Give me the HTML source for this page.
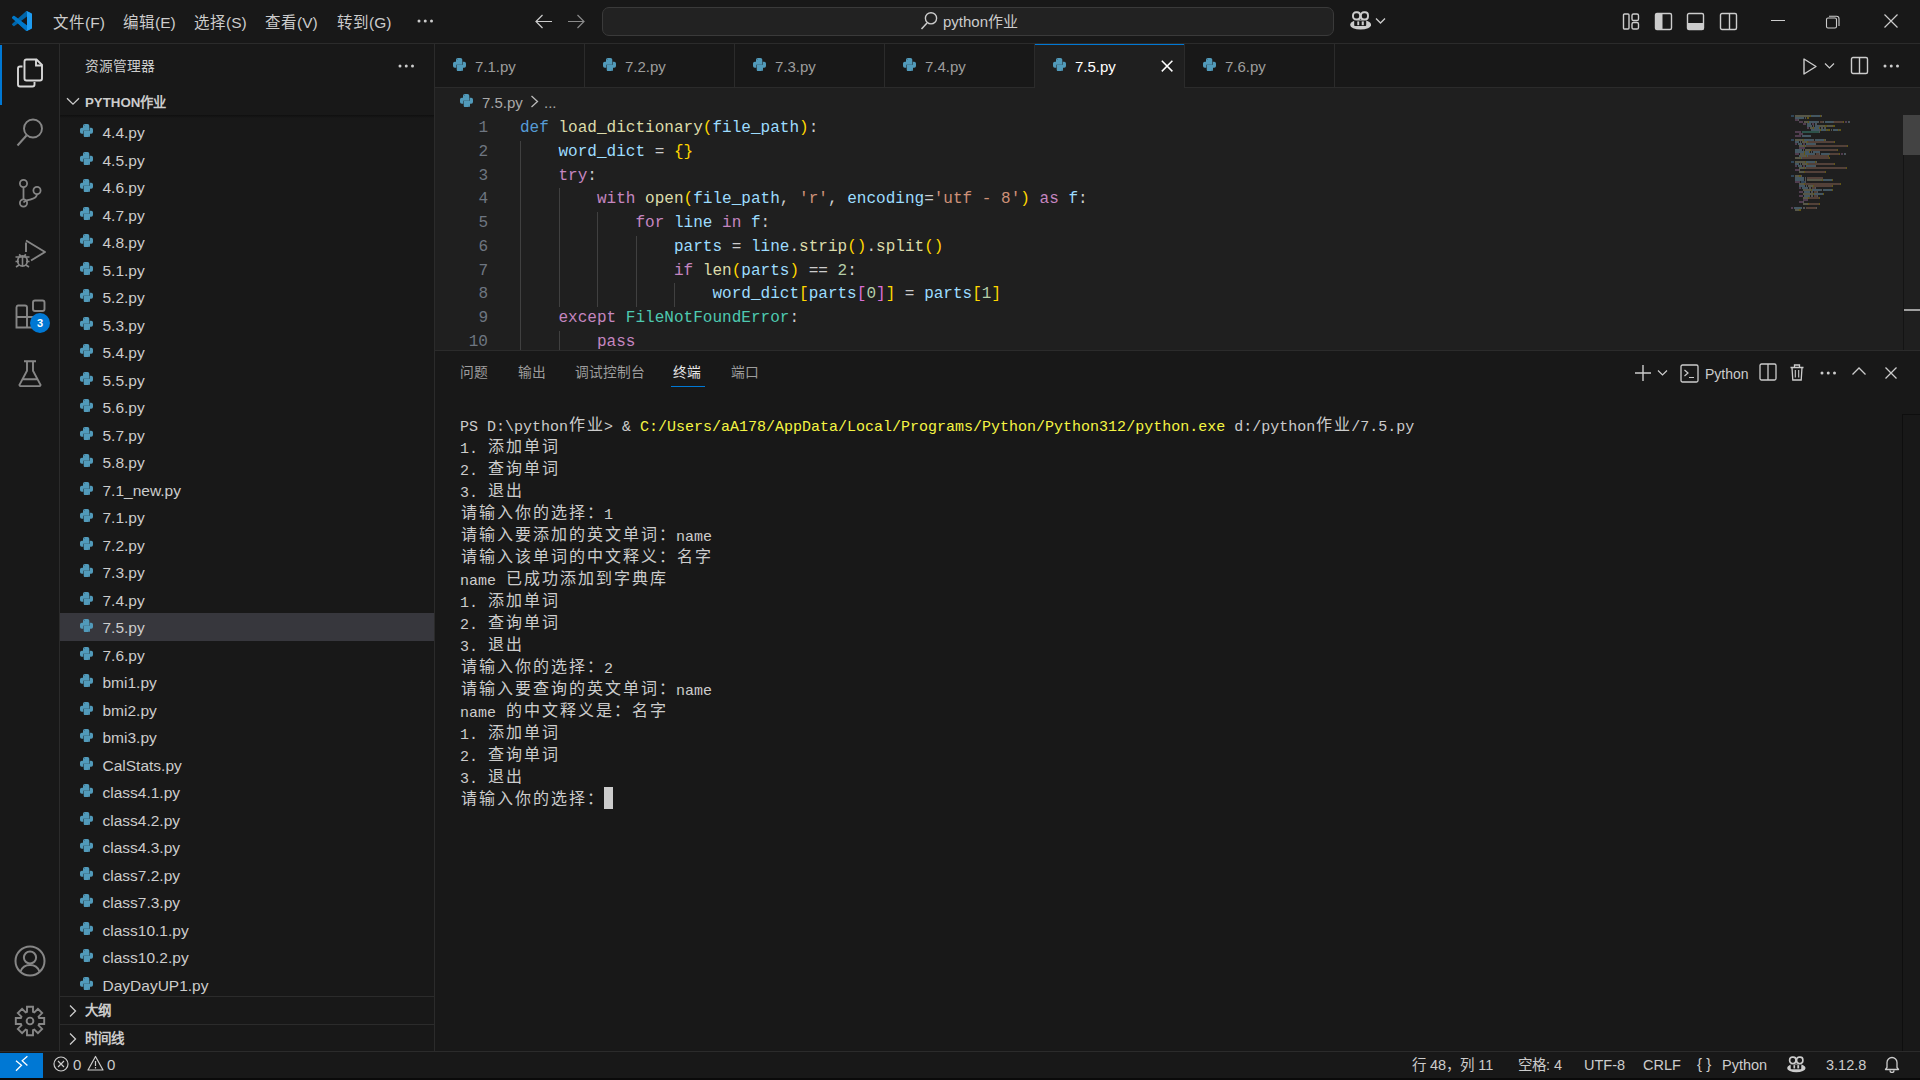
<!DOCTYPE html><html lang="zh-CN"><head><meta charset="utf-8"><title>VS Code</title><style>

*{margin:0;padding:0;box-sizing:border-box}
html,body{width:1920px;height:1080px;overflow:hidden;background:#181818;font-family:"Liberation Sans",sans-serif;color:#cccccc}
.abs{position:absolute}
.t{position:absolute;white-space:pre}
.code{position:absolute;left:520px;font-family:"Liberation Mono",monospace;font-size:16.04px;white-space:pre;color:#cccccc;height:23.75px;line-height:23.75px}
.ln{position:absolute;left:440px;width:48px;text-align:right;font-family:"Liberation Mono",monospace;font-size:16.04px;color:#6e7681;height:23.75px;line-height:23.75px}
.kw{color:#569cd6}.ct{color:#c586c0}.fn{color:#dcdcaa}.vr{color:#9cdcfe}.st{color:#ce9178}.nm{color:#b5cea8}.cl{color:#4ec9b0}.b1{color:#ffd700}.b2{color:#da70d6}.op{color:#cccccc}
.guide{position:absolute;width:1px;background:#404040}
.row{position:absolute;left:60px;width:374px;height:27.5px}
.row .n{position:absolute;left:42.5px;top:1px;font-size:15.5px;line-height:27.5px;color:#cccccc;white-space:pre}
.term{position:absolute;left:460px;font-family:"Liberation Mono",monospace;font-size:15px;white-space:pre;color:#cccccc;height:22px;line-height:22px}
.w{display:inline-block;position:relative;top:-1px;width:18px;text-align:center;font-family:"Liberation Sans",sans-serif;font-size:16px}
.ico{position:absolute}

</style></head><body>
<div class="abs" style="left:0;top:0;width:1920px;height:43px;background:#181818"></div>
<div class="abs" style="left:0;top:43px;width:1920px;height:1px;background:#2b2b2b"></div>
<svg class="ico" style="left:12px;top:11px" width="20" height="20" viewBox="0 0 100 100"><path fill="#0065a9" d="M96.5 10.8 75.9.9a6.2 6.2 0 0 0-7.1 1.2L29.4 38 12.2 25a4.2 4.2 0 0 0-5.3.2l-5.5 5a4.2 4.2 0 0 0 0 6.2L16.3 50 1.4 63.6a4.2 4.2 0 0 0 0 6.2l5.5 5a4.2 4.2 0 0 0 5.3.2l17.2-13L68.8 97.9a6.2 6.2 0 0 0 7.1 1.2l20.6-9.9a6.2 6.2 0 0 0 3.5-5.6V16.4a6.2 6.2 0 0 0-3.5-5.6zM75 72.7 45.1 50 75 27.3v45.4z"/><path fill="#007acc" d="M96.5 89.2 75.9 99.1a6.2 6.2 0 0 1-7.1-1.2L1.4 36.4a4.2 4.2 0 0 1 0-6.2l5.5-5a4.2 4.2 0 0 1 5.3-.2l84.3 64.2z" opacity=".9"/><path fill="#1f9cf0" d="M75.9 99.1a6.2 6.2 0 0 1-7.1-1.2c2.3 2.3 6.2.7 6.2-2.6V4.7c0-3.3-3.9-4.9-6.2-2.6a6.2 6.2 0 0 1 7.1-1.2l20.6 9.9a6.2 6.2 0 0 1 3.5 5.6v67.2a6.2 6.2 0 0 1-3.5 5.6z"/></svg>
<div class="t" style="left:53px;top:13px;font-size:15.5px;line-height:20px;color:#cccccc">文件(F)</div>
<div class="t" style="left:123px;top:13px;font-size:15.5px;line-height:20px;color:#cccccc">编辑(E)</div>
<div class="t" style="left:194px;top:13px;font-size:15.5px;line-height:20px;color:#cccccc">选择(S)</div>
<div class="t" style="left:265px;top:13px;font-size:15.5px;line-height:20px;color:#cccccc">查看(V)</div>
<div class="t" style="left:337px;top:13px;font-size:15.5px;line-height:20px;color:#cccccc">转到(G)</div>
<svg class="ico" style="left:416px;top:18px" width="18.5" height="6" viewBox="0 0 18.5 6"><circle cx="3" cy="3" r="1.5" fill="#cccccc"/><circle cx="9.25" cy="3" r="1.5" fill="#cccccc"/><circle cx="15.5" cy="3" r="1.5" fill="#cccccc"/></svg>
<svg class="ico" style="left:534px;top:13px" width="19" height="17" viewBox="0 0 19 17"><path d="M18 8.5H2M8.5 2 2 8.5 8.5 15" fill="none" stroke="#cccccc" stroke-width="1.2"/></svg>
<svg class="ico" style="left:567px;top:13px" width="19" height="17" viewBox="0 0 19 17"><path d="M1 8.5h16M10.5 2 17 8.5 10.5 15" fill="none" stroke="#8b8b8b" stroke-width="1.2"/></svg>
<div class="abs" style="left:602px;top:7px;width:732px;height:29px;background:#222222;border:1px solid #3a3a3a;border-radius:7px"></div>
<svg class="ico" style="left:920px;top:12px" width="18" height="19" viewBox="0 0 18 19"><circle cx="11" cy="6.3" r="5.6" fill="none" stroke="#cccccc" stroke-width="1.4"/><path d="M7 11 1.5 17" stroke="#cccccc" stroke-width="1.5"/></svg>
<div class="t" style="left:943px;top:12px;font-size:15px;line-height:20px;color:#cccccc">python作业</div>
<svg class="ico" style="left:1350px;top:11px" width="21" height="19.0" viewBox="0 0 21 19"><ellipse cx="10.6" cy="13.7" rx="10.5" ry="4.9" fill="#cccccc"/><rect x="3" y="1.25" width="7.1" height="7.3" rx="3" fill="#181818" stroke="#cccccc" stroke-width="1.9"/><rect x="10.9" y="1.25" width="7.1" height="7.3" rx="3" fill="#181818" stroke="#cccccc" stroke-width="1.9"/><rect x="4.2" y="9.6" width="12" height="5.5" rx=".8" fill="#181818"/><rect x="7.3" y="10.4" width="1.9" height="3.8" fill="#cccccc"/><rect x="11.7" y="10.4" width="2.1" height="3.8" fill="#cccccc"/></svg>
<svg class="ico" style="left:1375px;top:17px" width="11" height="8" viewBox="0 0 11 8"><path d="M1 1.5 5.5 6 10 1.5" fill="none" stroke="#cccccc" stroke-width="1.3"/></svg>
<svg class="ico" style="left:1622px;top:12px" width="19" height="19" viewBox="0 0 19 19"><rect x="1.5" y="2" width="5.5" height="15" rx="1" fill="none" stroke="#cccccc" stroke-width="1.4"/><rect x="10" y="2" width="6.5" height="6.5" rx="1.6" fill="none" stroke="#cccccc" stroke-width="1.4"/><rect x="10" y="10.5" width="6.5" height="6.5" rx="1.6" fill="none" stroke="#cccccc" stroke-width="1.4"/></svg>
<svg class="ico" style="left:1654px;top:12px" width="19" height="19" viewBox="0 0 19 19"><rect x="1.5" y="1.5" width="16" height="16" rx="1.5" fill="none" stroke="#cccccc" stroke-width="1.4"/><rect x="1.5" y="1.5" width="7" height="16" fill="#cccccc"/></svg>
<svg class="ico" style="left:1686px;top:12px" width="19" height="19" viewBox="0 0 19 19"><rect x="1.5" y="1.5" width="16" height="16" rx="1.5" fill="none" stroke="#cccccc" stroke-width="1.4"/><rect x="1.5" y="11" width="16" height="6.5" fill="#cccccc"/></svg>
<svg class="ico" style="left:1719px;top:12px" width="19" height="19" viewBox="0 0 19 19"><rect x="1.5" y="1.5" width="16" height="16" rx="1.5" fill="none" stroke="#cccccc" stroke-width="1.4"/><path d="M10.5 1.5v16" stroke="#cccccc" stroke-width="1.4"/></svg>
<div class="abs" style="left:1771px;top:20px;width:14px;height:1px;background:#cccccc"></div>
<svg class="ico" style="left:1825px;top:14px" width="16" height="15" viewBox="0 0 16 15"><rect x="1.5" y="4" width="10" height="10" rx="1.5" fill="none" stroke="#cccccc" stroke-width="1.1"/><path d="M4 2.2h7.5a2.5 2.5 0 0 1 2.5 2.5V12" fill="none" stroke="#cccccc" stroke-width="1.1"/></svg>
<svg class="ico" style="left:1883px;top:13px" width="16" height="16" viewBox="0 0 16 16"><path d="M1.5 1.5l13 13M14.5 1.5l-13 13" stroke="#cccccc" stroke-width="1.2"/></svg>
<div class="abs" style="left:59px;top:44px;width:1px;height:1007px;background:#2b2b2b"></div>
<div class="abs" style="left:0;top:45px;width:2px;height:60px;background:#0078d4"></div>
<svg class="ico" style="left:15px;top:57px" width="30" height="32" viewBox="0 0 30 32"><path d="M11.5 2.5h10l5.5 5.5v13.5a2 2 0 0 1-2 2h-13.5a2 2 0 0 1-2-2V4.5a2 2 0 0 1 2-2z" fill="none" stroke="#d7d7d7" stroke-width="1.9"/><path d="M21 2.5v6h6" fill="none" stroke="#d7d7d7" stroke-width="1.9"/><path d="M7.5 9.5H5a2 2 0 0 0-2 2v16a2 2 0 0 0 2 2h12.5a2 2 0 0 0 2-2V25" fill="none" stroke="#d7d7d7" stroke-width="1.9"/></svg>
<svg class="ico" style="left:15px;top:117px" width="30" height="32" viewBox="0 0 30 32"><circle cx="18" cy="11.5" r="9" fill="none" stroke="#868686" stroke-width="1.9"/><path d="M11.5 18.5 2.5 28.5" stroke="#868686" stroke-width="2"/></svg>
<svg class="ico" style="left:15px;top:177px" width="30" height="32" viewBox="0 0 30 32"><circle cx="8.5" cy="6.5" r="3.6" fill="none" stroke="#868686" stroke-width="1.8"/><circle cx="8.5" cy="26" r="3.6" fill="none" stroke="#868686" stroke-width="1.8"/><circle cx="22" cy="13.5" r="3.6" fill="none" stroke="#868686" stroke-width="1.8"/><path d="M8.5 10v12.4M22 17.1c0 3.4-3 4.6-6.5 5.4-3 .6-5.5 1-7 3" fill="none" stroke="#868686" stroke-width="1.8"/></svg>
<svg class="ico" style="left:13px;top:236px" width="34" height="34" viewBox="0 0 34 34"><path d="M13 6.5v9.5M13 4.5l19 11.5-14 8.5" fill="none" stroke="#868686" stroke-width="1.9" stroke-linejoin="round"/><ellipse cx="9.5" cy="25" rx="4.8" ry="5.2" fill="none" stroke="#868686" stroke-width="1.8"/><path d="M2.5 21h14M2.5 25.5h3.5M13 25.5h3.5M3 31l3-2M16 31l-3-2M6 18.5l2 1.5M13 18.5l-2 1.5M9.5 20v10" fill="none" stroke="#868686" stroke-width="1.6"/></svg>
<svg class="ico" style="left:14px;top:296px" width="32" height="34" viewBox="0 0 32 34"><path d="M4 9.5h7a2 2 0 0 1 2 2v20H2.5V11.5a2 2 0 0 1 1.5-2zM2.5 21h18.5v10.5H13" fill="none" stroke="#868686" stroke-width="1.9"/><rect x="19" y="4.5" width="11.5" height="10.5" rx="2" fill="none" stroke="#868686" stroke-width="1.9"/></svg>
<div class="abs" style="left:30px;top:313px;width:20px;height:20px;border-radius:10px;background:#0078d4;color:#ffffff;font:bold 11px/20px 'Liberation Sans',sans-serif;text-align:center">3</div>
<svg class="ico" style="left:16px;top:357px" width="28" height="34" viewBox="0 0 28 34"><path d="M8 4.2h12M11 4.2v9.5L3.6 27.6a1 1 0 0 0 .9 1.5h19a1 1 0 0 0 .9-1.5L17 13.7V4.2M6.5 22.2h15" fill="none" stroke="#868686" stroke-width="1.9" stroke-linejoin="round"/></svg>
<svg class="ico" style="left:13px;top:944px" width="34" height="34" viewBox="0 0 34 34"><circle cx="17" cy="17" r="14.5" fill="none" stroke="#868686" stroke-width="2"/><circle cx="17" cy="13.5" r="6.1" fill="none" stroke="#868686" stroke-width="2"/><path d="M7.5 27.5c1.5-4 5-6.5 9.5-6.5s8 2.5 9.5 6.5" fill="none" stroke="#868686" stroke-width="2"/></svg>
<svg class="ico" style="left:13px;top:1004px" width="34" height="34" viewBox="0 0 34 34"><path d="M14.00 7.88L14.00 2.80L20.00 2.80L20.00 7.88L21.33 8.43L24.92 4.84L29.16 9.08L25.57 12.67L26.12 14.00L31.20 14.00L31.20 20.00L26.12 20.00L25.57 21.33L29.16 24.92L24.92 29.16L21.33 25.57L20.00 26.12L20.00 31.20L14.00 31.20L14.00 26.12L12.67 25.57L9.08 29.16L4.84 24.92L8.43 21.33L7.88 20.00L2.80 20.00L2.80 14.00L7.88 14.00L8.43 12.67L4.84 9.08L9.08 4.84L12.67 8.43Z" fill="none" stroke="#868686" stroke-width="1.9" stroke-linejoin="miter"/><circle cx="17" cy="17" r="3.4" fill="none" stroke="#868686" stroke-width="1.9"/></svg>
<div class="abs" style="left:434px;top:44px;width:1px;height:1007px;background:#2b2b2b"></div>
<div class="t" style="left:85px;top:57.5px;font-size:13.75px;line-height:18px;color:#cccccc;font-weight:500">资源管理器</div>
<svg class="ico" style="left:397px;top:63px" width="18.5" height="6" viewBox="0 0 18.5 6"><circle cx="3" cy="3" r="1.5" fill="#cccccc"/><circle cx="9.25" cy="3" r="1.5" fill="#cccccc"/><circle cx="15.5" cy="3" r="1.5" fill="#cccccc"/></svg>
<svg class="ico" style="left:66px;top:97px" width="14" height="9" viewBox="0 0 14 9"><path d="M1 1.2 7 7.2 13 1.2" fill="none" stroke="#cccccc" stroke-width="1.3"/></svg>
<div class="t" style="left:85px;top:94px;font-weight:bold;font-size:13.3px;line-height:18px;color:#cccccc">PYTHON作业</div>
<div class="abs" style="left:60px;top:115px;width:374px;height:3px;background:linear-gradient(#0f0f0f,#181818)"></div>
<div class="row" style="top:118.0px;"><svg style="position:absolute;left:20px;top:6px" width="13" height="13.4" viewBox="0 0 13 13.4"><path fill="#519aba" d="M4.8 0H7.5Q9.3 0 9.3 1.8V6.7H3.3V9.7H1.8Q0 9.7 0 7.9V5.5Q0 3.7 1.8 3.7H3V1.8Q3 0 4.8 0Z"/><path fill="#519aba" transform="rotate(180 6.5 6.7)" d="M4.8 0H7.5Q9.3 0 9.3 1.8V6.7H3.3V9.7H1.8Q0 9.7 0 7.9V5.5Q0 3.7 1.8 3.7H3V1.8Q3 0 4.8 0Z"/><circle cx="4.4" cy="1.3" r=".45" fill="#2b4c66"/><circle cx="8.6" cy="12.1" r=".45" fill="#2b4c66"/></svg><div class="n">4.4.py</div></div>
<div class="row" style="top:145.5px;"><svg style="position:absolute;left:20px;top:6px" width="13" height="13.4" viewBox="0 0 13 13.4"><path fill="#519aba" d="M4.8 0H7.5Q9.3 0 9.3 1.8V6.7H3.3V9.7H1.8Q0 9.7 0 7.9V5.5Q0 3.7 1.8 3.7H3V1.8Q3 0 4.8 0Z"/><path fill="#519aba" transform="rotate(180 6.5 6.7)" d="M4.8 0H7.5Q9.3 0 9.3 1.8V6.7H3.3V9.7H1.8Q0 9.7 0 7.9V5.5Q0 3.7 1.8 3.7H3V1.8Q3 0 4.8 0Z"/><circle cx="4.4" cy="1.3" r=".45" fill="#2b4c66"/><circle cx="8.6" cy="12.1" r=".45" fill="#2b4c66"/></svg><div class="n">4.5.py</div></div>
<div class="row" style="top:173.0px;"><svg style="position:absolute;left:20px;top:6px" width="13" height="13.4" viewBox="0 0 13 13.4"><path fill="#519aba" d="M4.8 0H7.5Q9.3 0 9.3 1.8V6.7H3.3V9.7H1.8Q0 9.7 0 7.9V5.5Q0 3.7 1.8 3.7H3V1.8Q3 0 4.8 0Z"/><path fill="#519aba" transform="rotate(180 6.5 6.7)" d="M4.8 0H7.5Q9.3 0 9.3 1.8V6.7H3.3V9.7H1.8Q0 9.7 0 7.9V5.5Q0 3.7 1.8 3.7H3V1.8Q3 0 4.8 0Z"/><circle cx="4.4" cy="1.3" r=".45" fill="#2b4c66"/><circle cx="8.6" cy="12.1" r=".45" fill="#2b4c66"/></svg><div class="n">4.6.py</div></div>
<div class="row" style="top:200.5px;"><svg style="position:absolute;left:20px;top:6px" width="13" height="13.4" viewBox="0 0 13 13.4"><path fill="#519aba" d="M4.8 0H7.5Q9.3 0 9.3 1.8V6.7H3.3V9.7H1.8Q0 9.7 0 7.9V5.5Q0 3.7 1.8 3.7H3V1.8Q3 0 4.8 0Z"/><path fill="#519aba" transform="rotate(180 6.5 6.7)" d="M4.8 0H7.5Q9.3 0 9.3 1.8V6.7H3.3V9.7H1.8Q0 9.7 0 7.9V5.5Q0 3.7 1.8 3.7H3V1.8Q3 0 4.8 0Z"/><circle cx="4.4" cy="1.3" r=".45" fill="#2b4c66"/><circle cx="8.6" cy="12.1" r=".45" fill="#2b4c66"/></svg><div class="n">4.7.py</div></div>
<div class="row" style="top:228.0px;"><svg style="position:absolute;left:20px;top:6px" width="13" height="13.4" viewBox="0 0 13 13.4"><path fill="#519aba" d="M4.8 0H7.5Q9.3 0 9.3 1.8V6.7H3.3V9.7H1.8Q0 9.7 0 7.9V5.5Q0 3.7 1.8 3.7H3V1.8Q3 0 4.8 0Z"/><path fill="#519aba" transform="rotate(180 6.5 6.7)" d="M4.8 0H7.5Q9.3 0 9.3 1.8V6.7H3.3V9.7H1.8Q0 9.7 0 7.9V5.5Q0 3.7 1.8 3.7H3V1.8Q3 0 4.8 0Z"/><circle cx="4.4" cy="1.3" r=".45" fill="#2b4c66"/><circle cx="8.6" cy="12.1" r=".45" fill="#2b4c66"/></svg><div class="n">4.8.py</div></div>
<div class="row" style="top:255.5px;"><svg style="position:absolute;left:20px;top:6px" width="13" height="13.4" viewBox="0 0 13 13.4"><path fill="#519aba" d="M4.8 0H7.5Q9.3 0 9.3 1.8V6.7H3.3V9.7H1.8Q0 9.7 0 7.9V5.5Q0 3.7 1.8 3.7H3V1.8Q3 0 4.8 0Z"/><path fill="#519aba" transform="rotate(180 6.5 6.7)" d="M4.8 0H7.5Q9.3 0 9.3 1.8V6.7H3.3V9.7H1.8Q0 9.7 0 7.9V5.5Q0 3.7 1.8 3.7H3V1.8Q3 0 4.8 0Z"/><circle cx="4.4" cy="1.3" r=".45" fill="#2b4c66"/><circle cx="8.6" cy="12.1" r=".45" fill="#2b4c66"/></svg><div class="n">5.1.py</div></div>
<div class="row" style="top:283.0px;"><svg style="position:absolute;left:20px;top:6px" width="13" height="13.4" viewBox="0 0 13 13.4"><path fill="#519aba" d="M4.8 0H7.5Q9.3 0 9.3 1.8V6.7H3.3V9.7H1.8Q0 9.7 0 7.9V5.5Q0 3.7 1.8 3.7H3V1.8Q3 0 4.8 0Z"/><path fill="#519aba" transform="rotate(180 6.5 6.7)" d="M4.8 0H7.5Q9.3 0 9.3 1.8V6.7H3.3V9.7H1.8Q0 9.7 0 7.9V5.5Q0 3.7 1.8 3.7H3V1.8Q3 0 4.8 0Z"/><circle cx="4.4" cy="1.3" r=".45" fill="#2b4c66"/><circle cx="8.6" cy="12.1" r=".45" fill="#2b4c66"/></svg><div class="n">5.2.py</div></div>
<div class="row" style="top:310.5px;"><svg style="position:absolute;left:20px;top:6px" width="13" height="13.4" viewBox="0 0 13 13.4"><path fill="#519aba" d="M4.8 0H7.5Q9.3 0 9.3 1.8V6.7H3.3V9.7H1.8Q0 9.7 0 7.9V5.5Q0 3.7 1.8 3.7H3V1.8Q3 0 4.8 0Z"/><path fill="#519aba" transform="rotate(180 6.5 6.7)" d="M4.8 0H7.5Q9.3 0 9.3 1.8V6.7H3.3V9.7H1.8Q0 9.7 0 7.9V5.5Q0 3.7 1.8 3.7H3V1.8Q3 0 4.8 0Z"/><circle cx="4.4" cy="1.3" r=".45" fill="#2b4c66"/><circle cx="8.6" cy="12.1" r=".45" fill="#2b4c66"/></svg><div class="n">5.3.py</div></div>
<div class="row" style="top:338.0px;"><svg style="position:absolute;left:20px;top:6px" width="13" height="13.4" viewBox="0 0 13 13.4"><path fill="#519aba" d="M4.8 0H7.5Q9.3 0 9.3 1.8V6.7H3.3V9.7H1.8Q0 9.7 0 7.9V5.5Q0 3.7 1.8 3.7H3V1.8Q3 0 4.8 0Z"/><path fill="#519aba" transform="rotate(180 6.5 6.7)" d="M4.8 0H7.5Q9.3 0 9.3 1.8V6.7H3.3V9.7H1.8Q0 9.7 0 7.9V5.5Q0 3.7 1.8 3.7H3V1.8Q3 0 4.8 0Z"/><circle cx="4.4" cy="1.3" r=".45" fill="#2b4c66"/><circle cx="8.6" cy="12.1" r=".45" fill="#2b4c66"/></svg><div class="n">5.4.py</div></div>
<div class="row" style="top:365.5px;"><svg style="position:absolute;left:20px;top:6px" width="13" height="13.4" viewBox="0 0 13 13.4"><path fill="#519aba" d="M4.8 0H7.5Q9.3 0 9.3 1.8V6.7H3.3V9.7H1.8Q0 9.7 0 7.9V5.5Q0 3.7 1.8 3.7H3V1.8Q3 0 4.8 0Z"/><path fill="#519aba" transform="rotate(180 6.5 6.7)" d="M4.8 0H7.5Q9.3 0 9.3 1.8V6.7H3.3V9.7H1.8Q0 9.7 0 7.9V5.5Q0 3.7 1.8 3.7H3V1.8Q3 0 4.8 0Z"/><circle cx="4.4" cy="1.3" r=".45" fill="#2b4c66"/><circle cx="8.6" cy="12.1" r=".45" fill="#2b4c66"/></svg><div class="n">5.5.py</div></div>
<div class="row" style="top:393.0px;"><svg style="position:absolute;left:20px;top:6px" width="13" height="13.4" viewBox="0 0 13 13.4"><path fill="#519aba" d="M4.8 0H7.5Q9.3 0 9.3 1.8V6.7H3.3V9.7H1.8Q0 9.7 0 7.9V5.5Q0 3.7 1.8 3.7H3V1.8Q3 0 4.8 0Z"/><path fill="#519aba" transform="rotate(180 6.5 6.7)" d="M4.8 0H7.5Q9.3 0 9.3 1.8V6.7H3.3V9.7H1.8Q0 9.7 0 7.9V5.5Q0 3.7 1.8 3.7H3V1.8Q3 0 4.8 0Z"/><circle cx="4.4" cy="1.3" r=".45" fill="#2b4c66"/><circle cx="8.6" cy="12.1" r=".45" fill="#2b4c66"/></svg><div class="n">5.6.py</div></div>
<div class="row" style="top:420.5px;"><svg style="position:absolute;left:20px;top:6px" width="13" height="13.4" viewBox="0 0 13 13.4"><path fill="#519aba" d="M4.8 0H7.5Q9.3 0 9.3 1.8V6.7H3.3V9.7H1.8Q0 9.7 0 7.9V5.5Q0 3.7 1.8 3.7H3V1.8Q3 0 4.8 0Z"/><path fill="#519aba" transform="rotate(180 6.5 6.7)" d="M4.8 0H7.5Q9.3 0 9.3 1.8V6.7H3.3V9.7H1.8Q0 9.7 0 7.9V5.5Q0 3.7 1.8 3.7H3V1.8Q3 0 4.8 0Z"/><circle cx="4.4" cy="1.3" r=".45" fill="#2b4c66"/><circle cx="8.6" cy="12.1" r=".45" fill="#2b4c66"/></svg><div class="n">5.7.py</div></div>
<div class="row" style="top:448.0px;"><svg style="position:absolute;left:20px;top:6px" width="13" height="13.4" viewBox="0 0 13 13.4"><path fill="#519aba" d="M4.8 0H7.5Q9.3 0 9.3 1.8V6.7H3.3V9.7H1.8Q0 9.7 0 7.9V5.5Q0 3.7 1.8 3.7H3V1.8Q3 0 4.8 0Z"/><path fill="#519aba" transform="rotate(180 6.5 6.7)" d="M4.8 0H7.5Q9.3 0 9.3 1.8V6.7H3.3V9.7H1.8Q0 9.7 0 7.9V5.5Q0 3.7 1.8 3.7H3V1.8Q3 0 4.8 0Z"/><circle cx="4.4" cy="1.3" r=".45" fill="#2b4c66"/><circle cx="8.6" cy="12.1" r=".45" fill="#2b4c66"/></svg><div class="n">5.8.py</div></div>
<div class="row" style="top:475.5px;"><svg style="position:absolute;left:20px;top:6px" width="13" height="13.4" viewBox="0 0 13 13.4"><path fill="#519aba" d="M4.8 0H7.5Q9.3 0 9.3 1.8V6.7H3.3V9.7H1.8Q0 9.7 0 7.9V5.5Q0 3.7 1.8 3.7H3V1.8Q3 0 4.8 0Z"/><path fill="#519aba" transform="rotate(180 6.5 6.7)" d="M4.8 0H7.5Q9.3 0 9.3 1.8V6.7H3.3V9.7H1.8Q0 9.7 0 7.9V5.5Q0 3.7 1.8 3.7H3V1.8Q3 0 4.8 0Z"/><circle cx="4.4" cy="1.3" r=".45" fill="#2b4c66"/><circle cx="8.6" cy="12.1" r=".45" fill="#2b4c66"/></svg><div class="n">7.1_new.py</div></div>
<div class="row" style="top:503.0px;"><svg style="position:absolute;left:20px;top:6px" width="13" height="13.4" viewBox="0 0 13 13.4"><path fill="#519aba" d="M4.8 0H7.5Q9.3 0 9.3 1.8V6.7H3.3V9.7H1.8Q0 9.7 0 7.9V5.5Q0 3.7 1.8 3.7H3V1.8Q3 0 4.8 0Z"/><path fill="#519aba" transform="rotate(180 6.5 6.7)" d="M4.8 0H7.5Q9.3 0 9.3 1.8V6.7H3.3V9.7H1.8Q0 9.7 0 7.9V5.5Q0 3.7 1.8 3.7H3V1.8Q3 0 4.8 0Z"/><circle cx="4.4" cy="1.3" r=".45" fill="#2b4c66"/><circle cx="8.6" cy="12.1" r=".45" fill="#2b4c66"/></svg><div class="n">7.1.py</div></div>
<div class="row" style="top:530.5px;"><svg style="position:absolute;left:20px;top:6px" width="13" height="13.4" viewBox="0 0 13 13.4"><path fill="#519aba" d="M4.8 0H7.5Q9.3 0 9.3 1.8V6.7H3.3V9.7H1.8Q0 9.7 0 7.9V5.5Q0 3.7 1.8 3.7H3V1.8Q3 0 4.8 0Z"/><path fill="#519aba" transform="rotate(180 6.5 6.7)" d="M4.8 0H7.5Q9.3 0 9.3 1.8V6.7H3.3V9.7H1.8Q0 9.7 0 7.9V5.5Q0 3.7 1.8 3.7H3V1.8Q3 0 4.8 0Z"/><circle cx="4.4" cy="1.3" r=".45" fill="#2b4c66"/><circle cx="8.6" cy="12.1" r=".45" fill="#2b4c66"/></svg><div class="n">7.2.py</div></div>
<div class="row" style="top:558.0px;"><svg style="position:absolute;left:20px;top:6px" width="13" height="13.4" viewBox="0 0 13 13.4"><path fill="#519aba" d="M4.8 0H7.5Q9.3 0 9.3 1.8V6.7H3.3V9.7H1.8Q0 9.7 0 7.9V5.5Q0 3.7 1.8 3.7H3V1.8Q3 0 4.8 0Z"/><path fill="#519aba" transform="rotate(180 6.5 6.7)" d="M4.8 0H7.5Q9.3 0 9.3 1.8V6.7H3.3V9.7H1.8Q0 9.7 0 7.9V5.5Q0 3.7 1.8 3.7H3V1.8Q3 0 4.8 0Z"/><circle cx="4.4" cy="1.3" r=".45" fill="#2b4c66"/><circle cx="8.6" cy="12.1" r=".45" fill="#2b4c66"/></svg><div class="n">7.3.py</div></div>
<div class="row" style="top:585.5px;"><svg style="position:absolute;left:20px;top:6px" width="13" height="13.4" viewBox="0 0 13 13.4"><path fill="#519aba" d="M4.8 0H7.5Q9.3 0 9.3 1.8V6.7H3.3V9.7H1.8Q0 9.7 0 7.9V5.5Q0 3.7 1.8 3.7H3V1.8Q3 0 4.8 0Z"/><path fill="#519aba" transform="rotate(180 6.5 6.7)" d="M4.8 0H7.5Q9.3 0 9.3 1.8V6.7H3.3V9.7H1.8Q0 9.7 0 7.9V5.5Q0 3.7 1.8 3.7H3V1.8Q3 0 4.8 0Z"/><circle cx="4.4" cy="1.3" r=".45" fill="#2b4c66"/><circle cx="8.6" cy="12.1" r=".45" fill="#2b4c66"/></svg><div class="n">7.4.py</div></div>
<div class="row" style="top:613.0px;background:#37373d;"><svg style="position:absolute;left:20px;top:6px" width="13" height="13.4" viewBox="0 0 13 13.4"><path fill="#519aba" d="M4.8 0H7.5Q9.3 0 9.3 1.8V6.7H3.3V9.7H1.8Q0 9.7 0 7.9V5.5Q0 3.7 1.8 3.7H3V1.8Q3 0 4.8 0Z"/><path fill="#519aba" transform="rotate(180 6.5 6.7)" d="M4.8 0H7.5Q9.3 0 9.3 1.8V6.7H3.3V9.7H1.8Q0 9.7 0 7.9V5.5Q0 3.7 1.8 3.7H3V1.8Q3 0 4.8 0Z"/><circle cx="4.4" cy="1.3" r=".45" fill="#2b4c66"/><circle cx="8.6" cy="12.1" r=".45" fill="#2b4c66"/></svg><div class="n">7.5.py</div></div>
<div class="row" style="top:640.5px;"><svg style="position:absolute;left:20px;top:6px" width="13" height="13.4" viewBox="0 0 13 13.4"><path fill="#519aba" d="M4.8 0H7.5Q9.3 0 9.3 1.8V6.7H3.3V9.7H1.8Q0 9.7 0 7.9V5.5Q0 3.7 1.8 3.7H3V1.8Q3 0 4.8 0Z"/><path fill="#519aba" transform="rotate(180 6.5 6.7)" d="M4.8 0H7.5Q9.3 0 9.3 1.8V6.7H3.3V9.7H1.8Q0 9.7 0 7.9V5.5Q0 3.7 1.8 3.7H3V1.8Q3 0 4.8 0Z"/><circle cx="4.4" cy="1.3" r=".45" fill="#2b4c66"/><circle cx="8.6" cy="12.1" r=".45" fill="#2b4c66"/></svg><div class="n">7.6.py</div></div>
<div class="row" style="top:668.0px;"><svg style="position:absolute;left:20px;top:6px" width="13" height="13.4" viewBox="0 0 13 13.4"><path fill="#519aba" d="M4.8 0H7.5Q9.3 0 9.3 1.8V6.7H3.3V9.7H1.8Q0 9.7 0 7.9V5.5Q0 3.7 1.8 3.7H3V1.8Q3 0 4.8 0Z"/><path fill="#519aba" transform="rotate(180 6.5 6.7)" d="M4.8 0H7.5Q9.3 0 9.3 1.8V6.7H3.3V9.7H1.8Q0 9.7 0 7.9V5.5Q0 3.7 1.8 3.7H3V1.8Q3 0 4.8 0Z"/><circle cx="4.4" cy="1.3" r=".45" fill="#2b4c66"/><circle cx="8.6" cy="12.1" r=".45" fill="#2b4c66"/></svg><div class="n">bmi1.py</div></div>
<div class="row" style="top:695.5px;"><svg style="position:absolute;left:20px;top:6px" width="13" height="13.4" viewBox="0 0 13 13.4"><path fill="#519aba" d="M4.8 0H7.5Q9.3 0 9.3 1.8V6.7H3.3V9.7H1.8Q0 9.7 0 7.9V5.5Q0 3.7 1.8 3.7H3V1.8Q3 0 4.8 0Z"/><path fill="#519aba" transform="rotate(180 6.5 6.7)" d="M4.8 0H7.5Q9.3 0 9.3 1.8V6.7H3.3V9.7H1.8Q0 9.7 0 7.9V5.5Q0 3.7 1.8 3.7H3V1.8Q3 0 4.8 0Z"/><circle cx="4.4" cy="1.3" r=".45" fill="#2b4c66"/><circle cx="8.6" cy="12.1" r=".45" fill="#2b4c66"/></svg><div class="n">bmi2.py</div></div>
<div class="row" style="top:723.0px;"><svg style="position:absolute;left:20px;top:6px" width="13" height="13.4" viewBox="0 0 13 13.4"><path fill="#519aba" d="M4.8 0H7.5Q9.3 0 9.3 1.8V6.7H3.3V9.7H1.8Q0 9.7 0 7.9V5.5Q0 3.7 1.8 3.7H3V1.8Q3 0 4.8 0Z"/><path fill="#519aba" transform="rotate(180 6.5 6.7)" d="M4.8 0H7.5Q9.3 0 9.3 1.8V6.7H3.3V9.7H1.8Q0 9.7 0 7.9V5.5Q0 3.7 1.8 3.7H3V1.8Q3 0 4.8 0Z"/><circle cx="4.4" cy="1.3" r=".45" fill="#2b4c66"/><circle cx="8.6" cy="12.1" r=".45" fill="#2b4c66"/></svg><div class="n">bmi3.py</div></div>
<div class="row" style="top:750.5px;"><svg style="position:absolute;left:20px;top:6px" width="13" height="13.4" viewBox="0 0 13 13.4"><path fill="#519aba" d="M4.8 0H7.5Q9.3 0 9.3 1.8V6.7H3.3V9.7H1.8Q0 9.7 0 7.9V5.5Q0 3.7 1.8 3.7H3V1.8Q3 0 4.8 0Z"/><path fill="#519aba" transform="rotate(180 6.5 6.7)" d="M4.8 0H7.5Q9.3 0 9.3 1.8V6.7H3.3V9.7H1.8Q0 9.7 0 7.9V5.5Q0 3.7 1.8 3.7H3V1.8Q3 0 4.8 0Z"/><circle cx="4.4" cy="1.3" r=".45" fill="#2b4c66"/><circle cx="8.6" cy="12.1" r=".45" fill="#2b4c66"/></svg><div class="n">CalStats.py</div></div>
<div class="row" style="top:778.0px;"><svg style="position:absolute;left:20px;top:6px" width="13" height="13.4" viewBox="0 0 13 13.4"><path fill="#519aba" d="M4.8 0H7.5Q9.3 0 9.3 1.8V6.7H3.3V9.7H1.8Q0 9.7 0 7.9V5.5Q0 3.7 1.8 3.7H3V1.8Q3 0 4.8 0Z"/><path fill="#519aba" transform="rotate(180 6.5 6.7)" d="M4.8 0H7.5Q9.3 0 9.3 1.8V6.7H3.3V9.7H1.8Q0 9.7 0 7.9V5.5Q0 3.7 1.8 3.7H3V1.8Q3 0 4.8 0Z"/><circle cx="4.4" cy="1.3" r=".45" fill="#2b4c66"/><circle cx="8.6" cy="12.1" r=".45" fill="#2b4c66"/></svg><div class="n">class4.1.py</div></div>
<div class="row" style="top:805.5px;"><svg style="position:absolute;left:20px;top:6px" width="13" height="13.4" viewBox="0 0 13 13.4"><path fill="#519aba" d="M4.8 0H7.5Q9.3 0 9.3 1.8V6.7H3.3V9.7H1.8Q0 9.7 0 7.9V5.5Q0 3.7 1.8 3.7H3V1.8Q3 0 4.8 0Z"/><path fill="#519aba" transform="rotate(180 6.5 6.7)" d="M4.8 0H7.5Q9.3 0 9.3 1.8V6.7H3.3V9.7H1.8Q0 9.7 0 7.9V5.5Q0 3.7 1.8 3.7H3V1.8Q3 0 4.8 0Z"/><circle cx="4.4" cy="1.3" r=".45" fill="#2b4c66"/><circle cx="8.6" cy="12.1" r=".45" fill="#2b4c66"/></svg><div class="n">class4.2.py</div></div>
<div class="row" style="top:833.0px;"><svg style="position:absolute;left:20px;top:6px" width="13" height="13.4" viewBox="0 0 13 13.4"><path fill="#519aba" d="M4.8 0H7.5Q9.3 0 9.3 1.8V6.7H3.3V9.7H1.8Q0 9.7 0 7.9V5.5Q0 3.7 1.8 3.7H3V1.8Q3 0 4.8 0Z"/><path fill="#519aba" transform="rotate(180 6.5 6.7)" d="M4.8 0H7.5Q9.3 0 9.3 1.8V6.7H3.3V9.7H1.8Q0 9.7 0 7.9V5.5Q0 3.7 1.8 3.7H3V1.8Q3 0 4.8 0Z"/><circle cx="4.4" cy="1.3" r=".45" fill="#2b4c66"/><circle cx="8.6" cy="12.1" r=".45" fill="#2b4c66"/></svg><div class="n">class4.3.py</div></div>
<div class="row" style="top:860.5px;"><svg style="position:absolute;left:20px;top:6px" width="13" height="13.4" viewBox="0 0 13 13.4"><path fill="#519aba" d="M4.8 0H7.5Q9.3 0 9.3 1.8V6.7H3.3V9.7H1.8Q0 9.7 0 7.9V5.5Q0 3.7 1.8 3.7H3V1.8Q3 0 4.8 0Z"/><path fill="#519aba" transform="rotate(180 6.5 6.7)" d="M4.8 0H7.5Q9.3 0 9.3 1.8V6.7H3.3V9.7H1.8Q0 9.7 0 7.9V5.5Q0 3.7 1.8 3.7H3V1.8Q3 0 4.8 0Z"/><circle cx="4.4" cy="1.3" r=".45" fill="#2b4c66"/><circle cx="8.6" cy="12.1" r=".45" fill="#2b4c66"/></svg><div class="n">class7.2.py</div></div>
<div class="row" style="top:888.0px;"><svg style="position:absolute;left:20px;top:6px" width="13" height="13.4" viewBox="0 0 13 13.4"><path fill="#519aba" d="M4.8 0H7.5Q9.3 0 9.3 1.8V6.7H3.3V9.7H1.8Q0 9.7 0 7.9V5.5Q0 3.7 1.8 3.7H3V1.8Q3 0 4.8 0Z"/><path fill="#519aba" transform="rotate(180 6.5 6.7)" d="M4.8 0H7.5Q9.3 0 9.3 1.8V6.7H3.3V9.7H1.8Q0 9.7 0 7.9V5.5Q0 3.7 1.8 3.7H3V1.8Q3 0 4.8 0Z"/><circle cx="4.4" cy="1.3" r=".45" fill="#2b4c66"/><circle cx="8.6" cy="12.1" r=".45" fill="#2b4c66"/></svg><div class="n">class7.3.py</div></div>
<div class="row" style="top:915.5px;"><svg style="position:absolute;left:20px;top:6px" width="13" height="13.4" viewBox="0 0 13 13.4"><path fill="#519aba" d="M4.8 0H7.5Q9.3 0 9.3 1.8V6.7H3.3V9.7H1.8Q0 9.7 0 7.9V5.5Q0 3.7 1.8 3.7H3V1.8Q3 0 4.8 0Z"/><path fill="#519aba" transform="rotate(180 6.5 6.7)" d="M4.8 0H7.5Q9.3 0 9.3 1.8V6.7H3.3V9.7H1.8Q0 9.7 0 7.9V5.5Q0 3.7 1.8 3.7H3V1.8Q3 0 4.8 0Z"/><circle cx="4.4" cy="1.3" r=".45" fill="#2b4c66"/><circle cx="8.6" cy="12.1" r=".45" fill="#2b4c66"/></svg><div class="n">class10.1.py</div></div>
<div class="row" style="top:943.0px;"><svg style="position:absolute;left:20px;top:6px" width="13" height="13.4" viewBox="0 0 13 13.4"><path fill="#519aba" d="M4.8 0H7.5Q9.3 0 9.3 1.8V6.7H3.3V9.7H1.8Q0 9.7 0 7.9V5.5Q0 3.7 1.8 3.7H3V1.8Q3 0 4.8 0Z"/><path fill="#519aba" transform="rotate(180 6.5 6.7)" d="M4.8 0H7.5Q9.3 0 9.3 1.8V6.7H3.3V9.7H1.8Q0 9.7 0 7.9V5.5Q0 3.7 1.8 3.7H3V1.8Q3 0 4.8 0Z"/><circle cx="4.4" cy="1.3" r=".45" fill="#2b4c66"/><circle cx="8.6" cy="12.1" r=".45" fill="#2b4c66"/></svg><div class="n">class10.2.py</div></div>
<div class="row" style="top:970.5px;"><svg style="position:absolute;left:20px;top:6px" width="13" height="13.4" viewBox="0 0 13 13.4"><path fill="#519aba" d="M4.8 0H7.5Q9.3 0 9.3 1.8V6.7H3.3V9.7H1.8Q0 9.7 0 7.9V5.5Q0 3.7 1.8 3.7H3V1.8Q3 0 4.8 0Z"/><path fill="#519aba" transform="rotate(180 6.5 6.7)" d="M4.8 0H7.5Q9.3 0 9.3 1.8V6.7H3.3V9.7H1.8Q0 9.7 0 7.9V5.5Q0 3.7 1.8 3.7H3V1.8Q3 0 4.8 0Z"/><circle cx="4.4" cy="1.3" r=".45" fill="#2b4c66"/><circle cx="8.6" cy="12.1" r=".45" fill="#2b4c66"/></svg><div class="n">DayDayUP1.py</div></div>
<div class="abs" style="left:60px;top:996px;width:374px;height:1px;background:#2b2b2b"></div>
<div class="abs" style="left:60px;top:1024px;width:374px;height:1px;background:#2b2b2b"></div>
<svg class="ico" style="left:68px;top:1004px" width="10" height="14" viewBox="0 0 10 14"><path d="M2 1.5 7.5 7 2 12.5" fill="none" stroke="#cccccc" stroke-width="1.3"/></svg>
<svg class="ico" style="left:68px;top:1032px" width="10" height="14" viewBox="0 0 10 14"><path d="M2 1.5 7.5 7 2 12.5" fill="none" stroke="#cccccc" stroke-width="1.3"/></svg>
<div class="t" style="left:85px;top:1002px;font-weight:bold;font-size:13.5px;line-height:18px;color:#cccccc">大纲</div>
<div class="t" style="left:85px;top:1030px;font-weight:bold;font-size:13.5px;line-height:18px;color:#cccccc">时间线</div>
<div class="abs" style="left:435px;top:44px;width:1485px;height:44px;background:#181818"></div>
<div class="abs" style="left:435px;top:87px;width:1485px;height:1px;background:#2b2b2b"></div>
<div class="abs" style="left:584px;top:44px;width:1px;height:43px;background:#2b2b2b"></div>
<svg style="position:absolute;left:453px;top:58px" width="13" height="13.4" viewBox="0 0 13 13.4"><path fill="#519aba" d="M4.8 0H7.5Q9.3 0 9.3 1.8V6.7H3.3V9.7H1.8Q0 9.7 0 7.9V5.5Q0 3.7 1.8 3.7H3V1.8Q3 0 4.8 0Z"/><path fill="#519aba" transform="rotate(180 6.5 6.7)" d="M4.8 0H7.5Q9.3 0 9.3 1.8V6.7H3.3V9.7H1.8Q0 9.7 0 7.9V5.5Q0 3.7 1.8 3.7H3V1.8Q3 0 4.8 0Z"/><circle cx="4.4" cy="1.3" r=".45" fill="#2b4c66"/><circle cx="8.6" cy="12.1" r=".45" fill="#2b4c66"/></svg>
<div class="t" style="left:475px;top:58px;font-size:15px;line-height:18px;color:#9d9d9d">7.1.py</div>
<div class="abs" style="left:734px;top:44px;width:1px;height:43px;background:#2b2b2b"></div>
<svg style="position:absolute;left:603px;top:58px" width="13" height="13.4" viewBox="0 0 13 13.4"><path fill="#519aba" d="M4.8 0H7.5Q9.3 0 9.3 1.8V6.7H3.3V9.7H1.8Q0 9.7 0 7.9V5.5Q0 3.7 1.8 3.7H3V1.8Q3 0 4.8 0Z"/><path fill="#519aba" transform="rotate(180 6.5 6.7)" d="M4.8 0H7.5Q9.3 0 9.3 1.8V6.7H3.3V9.7H1.8Q0 9.7 0 7.9V5.5Q0 3.7 1.8 3.7H3V1.8Q3 0 4.8 0Z"/><circle cx="4.4" cy="1.3" r=".45" fill="#2b4c66"/><circle cx="8.6" cy="12.1" r=".45" fill="#2b4c66"/></svg>
<div class="t" style="left:625px;top:58px;font-size:15px;line-height:18px;color:#9d9d9d">7.2.py</div>
<div class="abs" style="left:884px;top:44px;width:1px;height:43px;background:#2b2b2b"></div>
<svg style="position:absolute;left:753px;top:58px" width="13" height="13.4" viewBox="0 0 13 13.4"><path fill="#519aba" d="M4.8 0H7.5Q9.3 0 9.3 1.8V6.7H3.3V9.7H1.8Q0 9.7 0 7.9V5.5Q0 3.7 1.8 3.7H3V1.8Q3 0 4.8 0Z"/><path fill="#519aba" transform="rotate(180 6.5 6.7)" d="M4.8 0H7.5Q9.3 0 9.3 1.8V6.7H3.3V9.7H1.8Q0 9.7 0 7.9V5.5Q0 3.7 1.8 3.7H3V1.8Q3 0 4.8 0Z"/><circle cx="4.4" cy="1.3" r=".45" fill="#2b4c66"/><circle cx="8.6" cy="12.1" r=".45" fill="#2b4c66"/></svg>
<div class="t" style="left:775px;top:58px;font-size:15px;line-height:18px;color:#9d9d9d">7.3.py</div>
<div class="abs" style="left:1034px;top:44px;width:1px;height:43px;background:#2b2b2b"></div>
<svg style="position:absolute;left:903px;top:58px" width="13" height="13.4" viewBox="0 0 13 13.4"><path fill="#519aba" d="M4.8 0H7.5Q9.3 0 9.3 1.8V6.7H3.3V9.7H1.8Q0 9.7 0 7.9V5.5Q0 3.7 1.8 3.7H3V1.8Q3 0 4.8 0Z"/><path fill="#519aba" transform="rotate(180 6.5 6.7)" d="M4.8 0H7.5Q9.3 0 9.3 1.8V6.7H3.3V9.7H1.8Q0 9.7 0 7.9V5.5Q0 3.7 1.8 3.7H3V1.8Q3 0 4.8 0Z"/><circle cx="4.4" cy="1.3" r=".45" fill="#2b4c66"/><circle cx="8.6" cy="12.1" r=".45" fill="#2b4c66"/></svg>
<div class="t" style="left:925px;top:58px;font-size:15px;line-height:18px;color:#9d9d9d">7.4.py</div>
<div class="abs" style="left:1035px;top:44px;width:149px;height:44px;background:#1f1f1f"></div>
<div class="abs" style="left:1035px;top:44px;width:149px;height:1px;background:#0078d4"></div>
<div class="abs" style="left:1184px;top:44px;width:1px;height:43px;background:#2b2b2b"></div>
<svg style="position:absolute;left:1053px;top:58px" width="13" height="13.4" viewBox="0 0 13 13.4"><path fill="#519aba" d="M4.8 0H7.5Q9.3 0 9.3 1.8V6.7H3.3V9.7H1.8Q0 9.7 0 7.9V5.5Q0 3.7 1.8 3.7H3V1.8Q3 0 4.8 0Z"/><path fill="#519aba" transform="rotate(180 6.5 6.7)" d="M4.8 0H7.5Q9.3 0 9.3 1.8V6.7H3.3V9.7H1.8Q0 9.7 0 7.9V5.5Q0 3.7 1.8 3.7H3V1.8Q3 0 4.8 0Z"/><circle cx="4.4" cy="1.3" r=".45" fill="#2b4c66"/><circle cx="8.6" cy="12.1" r=".45" fill="#2b4c66"/></svg>
<div class="t" style="left:1075px;top:58px;font-size:15px;line-height:18px;color:#ffffff">7.5.py</div>
<svg class="ico" style="left:1160px;top:59px" width="14" height="14" viewBox="0 0 14 14"><path d="M1.8 1.8l10.6 10.6M12.4 1.8l-10.6 10.6" stroke="#ffffff" stroke-width="1.5"/></svg>
<div class="abs" style="left:1334px;top:44px;width:1px;height:43px;background:#2b2b2b"></div>
<svg style="position:absolute;left:1203px;top:58px" width="13" height="13.4" viewBox="0 0 13 13.4"><path fill="#519aba" d="M4.8 0H7.5Q9.3 0 9.3 1.8V6.7H3.3V9.7H1.8Q0 9.7 0 7.9V5.5Q0 3.7 1.8 3.7H3V1.8Q3 0 4.8 0Z"/><path fill="#519aba" transform="rotate(180 6.5 6.7)" d="M4.8 0H7.5Q9.3 0 9.3 1.8V6.7H3.3V9.7H1.8Q0 9.7 0 7.9V5.5Q0 3.7 1.8 3.7H3V1.8Q3 0 4.8 0Z"/><circle cx="4.4" cy="1.3" r=".45" fill="#2b4c66"/><circle cx="8.6" cy="12.1" r=".45" fill="#2b4c66"/></svg>
<div class="t" style="left:1225px;top:58px;font-size:15px;line-height:18px;color:#9d9d9d">7.6.py</div>
<div class="abs" style="left:1034px;top:44px;width:1px;height:43px;background:#2b2b2b"></div>
<svg class="ico" style="left:1801px;top:57px" width="18" height="19" viewBox="0 0 18 19"><path d="M3 2v15l12-7.5z" fill="none" stroke="#cccccc" stroke-width="1.4" stroke-linejoin="round"/></svg>
<svg class="ico" style="left:1824px;top:62px" width="11" height="8" viewBox="0 0 11 8"><path d="M1 1.5 5.5 6 10 1.5" fill="none" stroke="#cccccc" stroke-width="1.2"/></svg>
<svg class="ico" style="left:1850px;top:56px" width="19" height="19" viewBox="0 0 19 19"><rect x="1.5" y="1.5" width="16" height="16" rx="1.5" fill="none" stroke="#cccccc" stroke-width="1.4"/><path d="M9.5 1.5v16" stroke="#cccccc" stroke-width="1.4"/></svg>
<svg class="ico" style="left:1881.8px;top:63px" width="18.5" height="6" viewBox="0 0 18.5 6"><circle cx="3" cy="3" r="1.5" fill="#cccccc"/><circle cx="9.25" cy="3" r="1.5" fill="#cccccc"/><circle cx="15.5" cy="3" r="1.5" fill="#cccccc"/></svg>
<div class="abs" style="left:435px;top:88px;width:1485px;height:262px;background:#1f1f1f"></div>
<svg style="position:absolute;left:460px;top:94px" width="13" height="13.4" viewBox="0 0 13 13.4"><path fill="#519aba" d="M4.8 0H7.5Q9.3 0 9.3 1.8V6.7H3.3V9.7H1.8Q0 9.7 0 7.9V5.5Q0 3.7 1.8 3.7H3V1.8Q3 0 4.8 0Z"/><path fill="#519aba" transform="rotate(180 6.5 6.7)" d="M4.8 0H7.5Q9.3 0 9.3 1.8V6.7H3.3V9.7H1.8Q0 9.7 0 7.9V5.5Q0 3.7 1.8 3.7H3V1.8Q3 0 4.8 0Z"/><circle cx="4.4" cy="1.3" r=".45" fill="#2b4c66"/><circle cx="8.6" cy="12.1" r=".45" fill="#2b4c66"/></svg>
<div class="t" style="left:482px;top:94px;font-size:15px;line-height:18px;color:#a9a9a9">7.5.py</div>
<svg class="ico" style="left:530px;top:95px" width="10" height="13" viewBox="0 0 10 13"><path d="M1.5 1 7.5 6.5 1.5 12" fill="none" stroke="#bbbbbb" stroke-width="1.3"/></svg>
<div class="t" style="left:544px;top:94px;font-size:15px;line-height:18px;color:#a9a9a9">...</div>
<div class="ln" style="top:117.0px">1</div>
<div class="code" style="top:117.0px"><span class="kw">def</span> <span class="fn">load_dictionary</span><span class="b1">(</span><span class="vr">file_path</span><span class="b1">)</span>:</div>
<div class="ln" style="top:140.75px">2</div>
<div class="code" style="top:140.75px">    <span class="vr">word_dict</span> = <span class="b1">{}</span></div>
<div class="guide" style="left:520.0px;top:140.75px;height:23.75px"></div>
<div class="ln" style="top:164.5px">3</div>
<div class="code" style="top:164.5px">    <span class="ct">try</span>:</div>
<div class="guide" style="left:520.0px;top:164.5px;height:23.75px"></div>
<div class="ln" style="top:188.25px">4</div>
<div class="code" style="top:188.25px">        <span class="ct">with</span> <span class="fn">open</span><span class="b1">(</span><span class="vr">file_path</span>, <span class="st">'r'</span>, <span class="vr">encoding</span>=<span class="st">'utf - 8'</span><span class="b1">)</span> <span class="ct">as</span> <span class="vr">f</span>:</div>
<div class="guide" style="left:520.0px;top:188.25px;height:23.75px"></div>
<div class="guide" style="left:558.5px;top:188.25px;height:23.75px"></div>
<div class="ln" style="top:212.0px">5</div>
<div class="code" style="top:212.0px">            <span class="ct">for</span> <span class="vr">line</span> <span class="ct">in</span> <span class="vr">f</span>:</div>
<div class="guide" style="left:520.0px;top:212.0px;height:23.75px"></div>
<div class="guide" style="left:558.5px;top:212.0px;height:23.75px"></div>
<div class="guide" style="left:597.0px;top:212.0px;height:23.75px"></div>
<div class="ln" style="top:235.75px">6</div>
<div class="code" style="top:235.75px">                <span class="vr">parts</span> = <span class="vr">line</span>.<span class="fn">strip</span><span class="b1">()</span>.<span class="fn">split</span><span class="b1">()</span></div>
<div class="guide" style="left:520.0px;top:235.75px;height:23.75px"></div>
<div class="guide" style="left:558.5px;top:235.75px;height:23.75px"></div>
<div class="guide" style="left:597.0px;top:235.75px;height:23.75px"></div>
<div class="guide" style="left:635.5px;top:235.75px;height:23.75px"></div>
<div class="ln" style="top:259.5px">7</div>
<div class="code" style="top:259.5px">                <span class="ct">if</span> <span class="fn">len</span><span class="b1">(</span><span class="vr">parts</span><span class="b1">)</span> == <span class="nm">2</span>:</div>
<div class="guide" style="left:520.0px;top:259.5px;height:23.75px"></div>
<div class="guide" style="left:558.5px;top:259.5px;height:23.75px"></div>
<div class="guide" style="left:597.0px;top:259.5px;height:23.75px"></div>
<div class="guide" style="left:635.5px;top:259.5px;height:23.75px"></div>
<div class="ln" style="top:283.25px">8</div>
<div class="code" style="top:283.25px">                    <span class="vr">word_dict</span><span class="b1">[</span><span class="vr">parts</span><span class="b2">[</span><span class="nm">0</span><span class="b2">]</span><span class="b1">]</span> = <span class="vr">parts</span><span class="b1">[</span><span class="nm">1</span><span class="b1">]</span></div>
<div class="guide" style="left:520.0px;top:283.25px;height:23.75px"></div>
<div class="guide" style="left:558.5px;top:283.25px;height:23.75px"></div>
<div class="guide" style="left:597.0px;top:283.25px;height:23.75px"></div>
<div class="guide" style="left:635.5px;top:283.25px;height:23.75px"></div>
<div class="guide" style="left:674.0px;top:283.25px;height:23.75px"></div>
<div class="ln" style="top:307.0px">9</div>
<div class="code" style="top:307.0px">    <span class="ct">except</span> <span class="cl">FileNotFoundError</span>:</div>
<div class="guide" style="left:520.0px;top:307.0px;height:23.75px"></div>
<div class="ln" style="top:330.75px">10</div>
<div class="code" style="top:330.75px">        <span class="ct">pass</span></div>
<div class="guide" style="left:520.0px;top:330.75px;height:23.75px"></div>
<div class="guide" style="left:558.5px;top:330.75px;height:23.75px"></div>
<div class="abs" style="left:1791px;top:115px;width:3px;height:2px;background:#569cd6;opacity:.3"></div>
<div class="abs" style="left:1795px;top:115px;width:15px;height:2px;background:#dcdcaa;opacity:.3"></div>
<div class="abs" style="left:1810px;top:115px;width:1px;height:2px;background:#ffd700;opacity:.3"></div>
<div class="abs" style="left:1811px;top:115px;width:9px;height:2px;background:#9cdcfe;opacity:.3"></div>
<div class="abs" style="left:1820px;top:115px;width:1px;height:2px;background:#ffd700;opacity:.3"></div>
<div class="abs" style="left:1821px;top:115px;width:1px;height:2px;background:#cccccc;opacity:.3"></div>
<div class="abs" style="left:1795px;top:117px;width:9px;height:2px;background:#9cdcfe;opacity:.3"></div>
<div class="abs" style="left:1805px;top:117px;width:1px;height:2px;background:#cccccc;opacity:.3"></div>
<div class="abs" style="left:1807px;top:117px;width:1px;height:2px;background:#ffd700;opacity:.3"></div>
<div class="abs" style="left:1808px;top:117px;width:1px;height:2px;background:#ffd700;opacity:.3"></div>
<div class="abs" style="left:1795px;top:119px;width:3px;height:2px;background:#c586c0;opacity:.3"></div>
<div class="abs" style="left:1798px;top:119px;width:1px;height:2px;background:#cccccc;opacity:.3"></div>
<div class="abs" style="left:1799px;top:121px;width:4px;height:2px;background:#c586c0;opacity:.3"></div>
<div class="abs" style="left:1804px;top:121px;width:4px;height:2px;background:#dcdcaa;opacity:.3"></div>
<div class="abs" style="left:1808px;top:121px;width:1px;height:2px;background:#ffd700;opacity:.3"></div>
<div class="abs" style="left:1809px;top:121px;width:9px;height:2px;background:#9cdcfe;opacity:.3"></div>
<div class="abs" style="left:1818px;top:121px;width:1px;height:2px;background:#cccccc;opacity:.3"></div>
<div class="abs" style="left:1820px;top:121px;width:3px;height:2px;background:#ce9178;opacity:.3"></div>
<div class="abs" style="left:1823px;top:121px;width:1px;height:2px;background:#cccccc;opacity:.3"></div>
<div class="abs" style="left:1825px;top:121px;width:8px;height:2px;background:#9cdcfe;opacity:.3"></div>
<div class="abs" style="left:1833px;top:121px;width:1px;height:2px;background:#cccccc;opacity:.3"></div>
<div class="abs" style="left:1834px;top:121px;width:9px;height:2px;background:#ce9178;opacity:.3"></div>
<div class="abs" style="left:1843px;top:121px;width:1px;height:2px;background:#ffd700;opacity:.3"></div>
<div class="abs" style="left:1845px;top:121px;width:2px;height:2px;background:#c586c0;opacity:.3"></div>
<div class="abs" style="left:1848px;top:121px;width:1px;height:2px;background:#9cdcfe;opacity:.3"></div>
<div class="abs" style="left:1849px;top:121px;width:1px;height:2px;background:#cccccc;opacity:.3"></div>
<div class="abs" style="left:1803px;top:123px;width:3px;height:2px;background:#c586c0;opacity:.3"></div>
<div class="abs" style="left:1807px;top:123px;width:4px;height:2px;background:#9cdcfe;opacity:.3"></div>
<div class="abs" style="left:1812px;top:123px;width:2px;height:2px;background:#c586c0;opacity:.3"></div>
<div class="abs" style="left:1815px;top:123px;width:1px;height:2px;background:#9cdcfe;opacity:.3"></div>
<div class="abs" style="left:1816px;top:123px;width:1px;height:2px;background:#cccccc;opacity:.3"></div>
<div class="abs" style="left:1807px;top:125px;width:5px;height:2px;background:#9cdcfe;opacity:.3"></div>
<div class="abs" style="left:1813px;top:125px;width:1px;height:2px;background:#cccccc;opacity:.3"></div>
<div class="abs" style="left:1815px;top:125px;width:4px;height:2px;background:#9cdcfe;opacity:.3"></div>
<div class="abs" style="left:1819px;top:125px;width:1px;height:2px;background:#cccccc;opacity:.3"></div>
<div class="abs" style="left:1820px;top:125px;width:5px;height:2px;background:#dcdcaa;opacity:.3"></div>
<div class="abs" style="left:1825px;top:125px;width:1px;height:2px;background:#ffd700;opacity:.3"></div>
<div class="abs" style="left:1826px;top:125px;width:1px;height:2px;background:#ffd700;opacity:.3"></div>
<div class="abs" style="left:1827px;top:125px;width:1px;height:2px;background:#cccccc;opacity:.3"></div>
<div class="abs" style="left:1828px;top:125px;width:5px;height:2px;background:#dcdcaa;opacity:.3"></div>
<div class="abs" style="left:1833px;top:125px;width:1px;height:2px;background:#ffd700;opacity:.3"></div>
<div class="abs" style="left:1834px;top:125px;width:1px;height:2px;background:#ffd700;opacity:.3"></div>
<div class="abs" style="left:1807px;top:127px;width:2px;height:2px;background:#c586c0;opacity:.3"></div>
<div class="abs" style="left:1810px;top:127px;width:3px;height:2px;background:#dcdcaa;opacity:.3"></div>
<div class="abs" style="left:1813px;top:127px;width:1px;height:2px;background:#ffd700;opacity:.3"></div>
<div class="abs" style="left:1814px;top:127px;width:5px;height:2px;background:#9cdcfe;opacity:.3"></div>
<div class="abs" style="left:1819px;top:127px;width:1px;height:2px;background:#ffd700;opacity:.3"></div>
<div class="abs" style="left:1821px;top:127px;width:1px;height:2px;background:#cccccc;opacity:.3"></div>
<div class="abs" style="left:1822px;top:127px;width:1px;height:2px;background:#cccccc;opacity:.3"></div>
<div class="abs" style="left:1824px;top:127px;width:1px;height:2px;background:#b5cea8;opacity:.3"></div>
<div class="abs" style="left:1825px;top:127px;width:1px;height:2px;background:#cccccc;opacity:.3"></div>
<div class="abs" style="left:1811px;top:129px;width:9px;height:2px;background:#9cdcfe;opacity:.3"></div>
<div class="abs" style="left:1820px;top:129px;width:1px;height:2px;background:#ffd700;opacity:.3"></div>
<div class="abs" style="left:1821px;top:129px;width:5px;height:2px;background:#9cdcfe;opacity:.3"></div>
<div class="abs" style="left:1826px;top:129px;width:1px;height:2px;background:#ffd700;opacity:.3"></div>
<div class="abs" style="left:1827px;top:129px;width:1px;height:2px;background:#b5cea8;opacity:.3"></div>
<div class="abs" style="left:1828px;top:129px;width:1px;height:2px;background:#ffd700;opacity:.3"></div>
<div class="abs" style="left:1829px;top:129px;width:1px;height:2px;background:#ffd700;opacity:.3"></div>
<div class="abs" style="left:1831px;top:129px;width:1px;height:2px;background:#cccccc;opacity:.3"></div>
<div class="abs" style="left:1833px;top:129px;width:5px;height:2px;background:#9cdcfe;opacity:.3"></div>
<div class="abs" style="left:1838px;top:129px;width:1px;height:2px;background:#ffd700;opacity:.3"></div>
<div class="abs" style="left:1839px;top:129px;width:1px;height:2px;background:#b5cea8;opacity:.3"></div>
<div class="abs" style="left:1840px;top:129px;width:1px;height:2px;background:#ffd700;opacity:.3"></div>
<div class="abs" style="left:1795px;top:131px;width:6px;height:2px;background:#c586c0;opacity:.3"></div>
<div class="abs" style="left:1802px;top:131px;width:17px;height:2px;background:#4ec9b0;opacity:.3"></div>
<div class="abs" style="left:1819px;top:131px;width:1px;height:2px;background:#cccccc;opacity:.3"></div>
<div class="abs" style="left:1799px;top:133px;width:4px;height:2px;background:#c586c0;opacity:.3"></div>
<div class="abs" style="left:1795px;top:135px;width:6px;height:2px;background:#c586c0;opacity:.3"></div>
<div class="abs" style="left:1802px;top:135px;width:9px;height:2px;background:#9cdcfe;opacity:.3"></div>
<div class="abs" style="left:1791px;top:139px;width:3px;height:2px;background:#569cd6;opacity:.3"></div>
<div class="abs" style="left:1795px;top:139px;width:8px;height:2px;background:#dcdcaa;opacity:.3"></div>
<div class="abs" style="left:1803px;top:139px;width:1px;height:2px;background:#ffd700;opacity:.3"></div>
<div class="abs" style="left:1804px;top:139px;width:9px;height:2px;background:#9cdcfe;opacity:.3"></div>
<div class="abs" style="left:1813px;top:139px;width:1px;height:2px;background:#cccccc;opacity:.3"></div>
<div class="abs" style="left:1815px;top:139px;width:9px;height:2px;background:#9cdcfe;opacity:.3"></div>
<div class="abs" style="left:1824px;top:139px;width:1px;height:2px;background:#ffd700;opacity:.3"></div>
<div class="abs" style="left:1825px;top:139px;width:1px;height:2px;background:#cccccc;opacity:.3"></div>
<div class="abs" style="left:1795px;top:141px;width:4px;height:2px;background:#9cdcfe;opacity:.3"></div>
<div class="abs" style="left:1800px;top:141px;width:1px;height:2px;background:#cccccc;opacity:.3"></div>
<div class="abs" style="left:1802px;top:141px;width:5px;height:2px;background:#dcdcaa;opacity:.3"></div>
<div class="abs" style="left:1807px;top:141px;width:1px;height:2px;background:#ffd700;opacity:.3"></div>
<div class="abs" style="left:1808px;top:141px;width:26px;height:2px;background:#ce9178;opacity:.3"></div>
<div class="abs" style="left:1834px;top:141px;width:1px;height:2px;background:#ffd700;opacity:.3"></div>
<div class="abs" style="left:1795px;top:143px;width:2px;height:2px;background:#c586c0;opacity:.3"></div>
<div class="abs" style="left:1798px;top:143px;width:4px;height:2px;background:#9cdcfe;opacity:.3"></div>
<div class="abs" style="left:1803px;top:143px;width:2px;height:2px;background:#c586c0;opacity:.3"></div>
<div class="abs" style="left:1806px;top:143px;width:9px;height:2px;background:#9cdcfe;opacity:.3"></div>
<div class="abs" style="left:1815px;top:143px;width:1px;height:2px;background:#cccccc;opacity:.3"></div>
<div class="abs" style="left:1799px;top:145px;width:5px;height:2px;background:#dcdcaa;opacity:.3"></div>
<div class="abs" style="left:1804px;top:145px;width:1px;height:2px;background:#ffd700;opacity:.3"></div>
<div class="abs" style="left:1805px;top:145px;width:1px;height:2px;background:#9cdcfe;opacity:.3"></div>
<div class="abs" style="left:1806px;top:145px;width:41px;height:2px;background:#ce9178;opacity:.3"></div>
<div class="abs" style="left:1847px;top:145px;width:1px;height:2px;background:#ffd700;opacity:.3"></div>
<div class="abs" style="left:1799px;top:147px;width:6px;height:2px;background:#c586c0;opacity:.3"></div>
<div class="abs" style="left:1795px;top:149px;width:7px;height:2px;background:#9cdcfe;opacity:.3"></div>
<div class="abs" style="left:1803px;top:149px;width:1px;height:2px;background:#cccccc;opacity:.3"></div>
<div class="abs" style="left:1805px;top:149px;width:5px;height:2px;background:#dcdcaa;opacity:.3"></div>
<div class="abs" style="left:1810px;top:149px;width:1px;height:2px;background:#ffd700;opacity:.3"></div>
<div class="abs" style="left:1811px;top:149px;width:26px;height:2px;background:#ce9178;opacity:.3"></div>
<div class="abs" style="left:1837px;top:149px;width:1px;height:2px;background:#ffd700;opacity:.3"></div>
<div class="abs" style="left:1795px;top:151px;width:9px;height:2px;background:#9cdcfe;opacity:.3"></div>
<div class="abs" style="left:1804px;top:151px;width:1px;height:2px;background:#ffd700;opacity:.3"></div>
<div class="abs" style="left:1805px;top:151px;width:4px;height:2px;background:#9cdcfe;opacity:.3"></div>
<div class="abs" style="left:1809px;top:151px;width:1px;height:2px;background:#ffd700;opacity:.3"></div>
<div class="abs" style="left:1811px;top:151px;width:1px;height:2px;background:#cccccc;opacity:.3"></div>
<div class="abs" style="left:1813px;top:151px;width:7px;height:2px;background:#9cdcfe;opacity:.3"></div>
<div class="abs" style="left:1795px;top:153px;width:4px;height:2px;background:#c586c0;opacity:.3"></div>
<div class="abs" style="left:1800px;top:153px;width:4px;height:2px;background:#dcdcaa;opacity:.3"></div>
<div class="abs" style="left:1804px;top:153px;width:1px;height:2px;background:#ffd700;opacity:.3"></div>
<div class="abs" style="left:1805px;top:153px;width:9px;height:2px;background:#9cdcfe;opacity:.3"></div>
<div class="abs" style="left:1814px;top:153px;width:1px;height:2px;background:#cccccc;opacity:.3"></div>
<div class="abs" style="left:1816px;top:153px;width:3px;height:2px;background:#ce9178;opacity:.3"></div>
<div class="abs" style="left:1819px;top:153px;width:1px;height:2px;background:#cccccc;opacity:.3"></div>
<div class="abs" style="left:1821px;top:153px;width:8px;height:2px;background:#9cdcfe;opacity:.3"></div>
<div class="abs" style="left:1829px;top:153px;width:1px;height:2px;background:#cccccc;opacity:.3"></div>
<div class="abs" style="left:1830px;top:153px;width:9px;height:2px;background:#ce9178;opacity:.3"></div>
<div class="abs" style="left:1839px;top:153px;width:1px;height:2px;background:#ffd700;opacity:.3"></div>
<div class="abs" style="left:1841px;top:153px;width:2px;height:2px;background:#c586c0;opacity:.3"></div>
<div class="abs" style="left:1844px;top:153px;width:1px;height:2px;background:#9cdcfe;opacity:.3"></div>
<div class="abs" style="left:1845px;top:153px;width:1px;height:2px;background:#cccccc;opacity:.3"></div>
<div class="abs" style="left:1799px;top:155px;width:1px;height:2px;background:#9cdcfe;opacity:.3"></div>
<div class="abs" style="left:1800px;top:155px;width:1px;height:2px;background:#cccccc;opacity:.3"></div>
<div class="abs" style="left:1801px;top:155px;width:5px;height:2px;background:#dcdcaa;opacity:.3"></div>
<div class="abs" style="left:1806px;top:155px;width:1px;height:2px;background:#ffd700;opacity:.3"></div>
<div class="abs" style="left:1807px;top:155px;width:1px;height:2px;background:#9cdcfe;opacity:.3"></div>
<div class="abs" style="left:1808px;top:155px;width:20px;height:2px;background:#ce9178;opacity:.3"></div>
<div class="abs" style="left:1828px;top:155px;width:1px;height:2px;background:#ffd700;opacity:.3"></div>
<div class="abs" style="left:1795px;top:157px;width:5px;height:2px;background:#dcdcaa;opacity:.3"></div>
<div class="abs" style="left:1800px;top:157px;width:1px;height:2px;background:#ffd700;opacity:.3"></div>
<div class="abs" style="left:1801px;top:157px;width:1px;height:2px;background:#9cdcfe;opacity:.3"></div>
<div class="abs" style="left:1802px;top:157px;width:27px;height:2px;background:#ce9178;opacity:.3"></div>
<div class="abs" style="left:1829px;top:157px;width:1px;height:2px;background:#ffd700;opacity:.3"></div>
<div class="abs" style="left:1791px;top:161px;width:3px;height:2px;background:#569cd6;opacity:.3"></div>
<div class="abs" style="left:1795px;top:161px;width:10px;height:2px;background:#dcdcaa;opacity:.3"></div>
<div class="abs" style="left:1805px;top:161px;width:1px;height:2px;background:#ffd700;opacity:.3"></div>
<div class="abs" style="left:1806px;top:161px;width:9px;height:2px;background:#9cdcfe;opacity:.3"></div>
<div class="abs" style="left:1815px;top:161px;width:1px;height:2px;background:#ffd700;opacity:.3"></div>
<div class="abs" style="left:1816px;top:161px;width:1px;height:2px;background:#cccccc;opacity:.3"></div>
<div class="abs" style="left:1795px;top:163px;width:4px;height:2px;background:#9cdcfe;opacity:.3"></div>
<div class="abs" style="left:1800px;top:163px;width:1px;height:2px;background:#cccccc;opacity:.3"></div>
<div class="abs" style="left:1802px;top:163px;width:5px;height:2px;background:#dcdcaa;opacity:.3"></div>
<div class="abs" style="left:1807px;top:163px;width:1px;height:2px;background:#ffd700;opacity:.3"></div>
<div class="abs" style="left:1808px;top:163px;width:26px;height:2px;background:#ce9178;opacity:.3"></div>
<div class="abs" style="left:1834px;top:163px;width:1px;height:2px;background:#ffd700;opacity:.3"></div>
<div class="abs" style="left:1795px;top:165px;width:2px;height:2px;background:#c586c0;opacity:.3"></div>
<div class="abs" style="left:1798px;top:165px;width:4px;height:2px;background:#9cdcfe;opacity:.3"></div>
<div class="abs" style="left:1803px;top:165px;width:2px;height:2px;background:#c586c0;opacity:.3"></div>
<div class="abs" style="left:1806px;top:165px;width:9px;height:2px;background:#9cdcfe;opacity:.3"></div>
<div class="abs" style="left:1815px;top:165px;width:1px;height:2px;background:#cccccc;opacity:.3"></div>
<div class="abs" style="left:1799px;top:167px;width:5px;height:2px;background:#dcdcaa;opacity:.3"></div>
<div class="abs" style="left:1804px;top:167px;width:1px;height:2px;background:#ffd700;opacity:.3"></div>
<div class="abs" style="left:1805px;top:167px;width:1px;height:2px;background:#9cdcfe;opacity:.3"></div>
<div class="abs" style="left:1806px;top:167px;width:40px;height:2px;background:#ce9178;opacity:.3"></div>
<div class="abs" style="left:1846px;top:167px;width:1px;height:2px;background:#ffd700;opacity:.3"></div>
<div class="abs" style="left:1795px;top:169px;width:4px;height:2px;background:#c586c0;opacity:.3"></div>
<div class="abs" style="left:1799px;top:169px;width:1px;height:2px;background:#cccccc;opacity:.3"></div>
<div class="abs" style="left:1799px;top:171px;width:5px;height:2px;background:#dcdcaa;opacity:.3"></div>
<div class="abs" style="left:1804px;top:171px;width:1px;height:2px;background:#ffd700;opacity:.3"></div>
<div class="abs" style="left:1805px;top:171px;width:20px;height:2px;background:#ce9178;opacity:.3"></div>
<div class="abs" style="left:1825px;top:171px;width:1px;height:2px;background:#ffd700;opacity:.3"></div>
<div class="abs" style="left:1791px;top:175px;width:3px;height:2px;background:#569cd6;opacity:.3"></div>
<div class="abs" style="left:1795px;top:175px;width:4px;height:2px;background:#dcdcaa;opacity:.3"></div>
<div class="abs" style="left:1799px;top:175px;width:1px;height:2px;background:#ffd700;opacity:.3"></div>
<div class="abs" style="left:1800px;top:175px;width:1px;height:2px;background:#ffd700;opacity:.3"></div>
<div class="abs" style="left:1801px;top:175px;width:1px;height:2px;background:#cccccc;opacity:.3"></div>
<div class="abs" style="left:1795px;top:177px;width:9px;height:2px;background:#9cdcfe;opacity:.3"></div>
<div class="abs" style="left:1805px;top:177px;width:1px;height:2px;background:#cccccc;opacity:.3"></div>
<div class="abs" style="left:1807px;top:177px;width:16px;height:2px;background:#ce9178;opacity:.3"></div>
<div class="abs" style="left:1795px;top:179px;width:9px;height:2px;background:#9cdcfe;opacity:.3"></div>
<div class="abs" style="left:1805px;top:179px;width:1px;height:2px;background:#cccccc;opacity:.3"></div>
<div class="abs" style="left:1807px;top:179px;width:15px;height:2px;background:#dcdcaa;opacity:.3"></div>
<div class="abs" style="left:1822px;top:179px;width:1px;height:2px;background:#ffd700;opacity:.3"></div>
<div class="abs" style="left:1823px;top:179px;width:9px;height:2px;background:#9cdcfe;opacity:.3"></div>
<div class="abs" style="left:1832px;top:179px;width:1px;height:2px;background:#ffd700;opacity:.3"></div>
<div class="abs" style="left:1795px;top:181px;width:5px;height:2px;background:#c586c0;opacity:.3"></div>
<div class="abs" style="left:1801px;top:181px;width:4px;height:2px;background:#569cd6;opacity:.3"></div>
<div class="abs" style="left:1805px;top:181px;width:1px;height:2px;background:#cccccc;opacity:.3"></div>
<div class="abs" style="left:1799px;top:183px;width:5px;height:2px;background:#dcdcaa;opacity:.3"></div>
<div class="abs" style="left:1804px;top:183px;width:1px;height:2px;background:#ffd700;opacity:.3"></div>
<div class="abs" style="left:1805px;top:183px;width:35px;height:2px;background:#ce9178;opacity:.3"></div>
<div class="abs" style="left:1840px;top:183px;width:1px;height:2px;background:#ffd700;opacity:.3"></div>
<div class="abs" style="left:1799px;top:185px;width:6px;height:2px;background:#9cdcfe;opacity:.3"></div>
<div class="abs" style="left:1806px;top:185px;width:1px;height:2px;background:#cccccc;opacity:.3"></div>
<div class="abs" style="left:1808px;top:185px;width:5px;height:2px;background:#dcdcaa;opacity:.3"></div>
<div class="abs" style="left:1813px;top:185px;width:1px;height:2px;background:#ffd700;opacity:.3"></div>
<div class="abs" style="left:1814px;top:185px;width:18px;height:2px;background:#ce9178;opacity:.3"></div>
<div class="abs" style="left:1832px;top:185px;width:1px;height:2px;background:#ffd700;opacity:.3"></div>
<div class="abs" style="left:1799px;top:187px;width:2px;height:2px;background:#c586c0;opacity:.3"></div>
<div class="abs" style="left:1802px;top:187px;width:6px;height:2px;background:#9cdcfe;opacity:.3"></div>
<div class="abs" style="left:1809px;top:187px;width:1px;height:2px;background:#cccccc;opacity:.3"></div>
<div class="abs" style="left:1810px;top:187px;width:1px;height:2px;background:#cccccc;opacity:.3"></div>
<div class="abs" style="left:1812px;top:187px;width:3px;height:2px;background:#ce9178;opacity:.3"></div>
<div class="abs" style="left:1815px;top:187px;width:1px;height:2px;background:#cccccc;opacity:.3"></div>
<div class="abs" style="left:1803px;top:189px;width:8px;height:2px;background:#dcdcaa;opacity:.3"></div>
<div class="abs" style="left:1811px;top:189px;width:1px;height:2px;background:#ffd700;opacity:.3"></div>
<div class="abs" style="left:1812px;top:189px;width:9px;height:2px;background:#9cdcfe;opacity:.3"></div>
<div class="abs" style="left:1821px;top:189px;width:1px;height:2px;background:#cccccc;opacity:.3"></div>
<div class="abs" style="left:1823px;top:189px;width:9px;height:2px;background:#9cdcfe;opacity:.3"></div>
<div class="abs" style="left:1832px;top:189px;width:1px;height:2px;background:#ffd700;opacity:.3"></div>
<div class="abs" style="left:1799px;top:191px;width:4px;height:2px;background:#c586c0;opacity:.3"></div>
<div class="abs" style="left:1804px;top:191px;width:6px;height:2px;background:#9cdcfe;opacity:.3"></div>
<div class="abs" style="left:1811px;top:191px;width:1px;height:2px;background:#cccccc;opacity:.3"></div>
<div class="abs" style="left:1812px;top:191px;width:1px;height:2px;background:#cccccc;opacity:.3"></div>
<div class="abs" style="left:1814px;top:191px;width:3px;height:2px;background:#ce9178;opacity:.3"></div>
<div class="abs" style="left:1817px;top:191px;width:1px;height:2px;background:#cccccc;opacity:.3"></div>
<div class="abs" style="left:1803px;top:193px;width:10px;height:2px;background:#dcdcaa;opacity:.3"></div>
<div class="abs" style="left:1813px;top:193px;width:1px;height:2px;background:#ffd700;opacity:.3"></div>
<div class="abs" style="left:1814px;top:193px;width:9px;height:2px;background:#9cdcfe;opacity:.3"></div>
<div class="abs" style="left:1823px;top:193px;width:1px;height:2px;background:#ffd700;opacity:.3"></div>
<div class="abs" style="left:1799px;top:195px;width:4px;height:2px;background:#c586c0;opacity:.3"></div>
<div class="abs" style="left:1804px;top:195px;width:6px;height:2px;background:#9cdcfe;opacity:.3"></div>
<div class="abs" style="left:1811px;top:195px;width:1px;height:2px;background:#cccccc;opacity:.3"></div>
<div class="abs" style="left:1812px;top:195px;width:1px;height:2px;background:#cccccc;opacity:.3"></div>
<div class="abs" style="left:1814px;top:195px;width:3px;height:2px;background:#ce9178;opacity:.3"></div>
<div class="abs" style="left:1817px;top:195px;width:1px;height:2px;background:#cccccc;opacity:.3"></div>
<div class="abs" style="left:1803px;top:197px;width:5px;height:2px;background:#dcdcaa;opacity:.3"></div>
<div class="abs" style="left:1808px;top:197px;width:1px;height:2px;background:#ffd700;opacity:.3"></div>
<div class="abs" style="left:1809px;top:197px;width:10px;height:2px;background:#ce9178;opacity:.3"></div>
<div class="abs" style="left:1819px;top:197px;width:1px;height:2px;background:#ffd700;opacity:.3"></div>
<div class="abs" style="left:1803px;top:199px;width:5px;height:2px;background:#c586c0;opacity:.3"></div>
<div class="abs" style="left:1799px;top:201px;width:4px;height:2px;background:#c586c0;opacity:.3"></div>
<div class="abs" style="left:1803px;top:201px;width:1px;height:2px;background:#cccccc;opacity:.3"></div>
<div class="abs" style="left:1803px;top:203px;width:5px;height:2px;background:#dcdcaa;opacity:.3"></div>
<div class="abs" style="left:1808px;top:203px;width:1px;height:2px;background:#ffd700;opacity:.3"></div>
<div class="abs" style="left:1809px;top:203px;width:10px;height:2px;background:#ce9178;opacity:.3"></div>
<div class="abs" style="left:1819px;top:203px;width:1px;height:2px;background:#ffd700;opacity:.3"></div>
<div class="abs" style="left:1791px;top:207px;width:2px;height:2px;background:#c586c0;opacity:.3"></div>
<div class="abs" style="left:1794px;top:207px;width:8px;height:2px;background:#9cdcfe;opacity:.3"></div>
<div class="abs" style="left:1803px;top:207px;width:1px;height:2px;background:#cccccc;opacity:.3"></div>
<div class="abs" style="left:1804px;top:207px;width:1px;height:2px;background:#cccccc;opacity:.3"></div>
<div class="abs" style="left:1806px;top:207px;width:10px;height:2px;background:#ce9178;opacity:.3"></div>
<div class="abs" style="left:1816px;top:207px;width:1px;height:2px;background:#cccccc;opacity:.3"></div>
<div class="abs" style="left:1795px;top:209px;width:4px;height:2px;background:#dcdcaa;opacity:.3"></div>
<div class="abs" style="left:1799px;top:209px;width:1px;height:2px;background:#ffd700;opacity:.3"></div>
<div class="abs" style="left:1800px;top:209px;width:1px;height:2px;background:#ffd700;opacity:.3"></div>
<div class="abs" style="left:1903px;top:155px;width:1px;height:195px;background:#141414"></div>
<div class="abs" style="left:1903px;top:115px;width:17px;height:40px;background:#434343"></div>
<div class="abs" style="left:1904px;top:309px;width:16px;height:2px;background:#a0a0a0"></div>
<div class="abs" style="left:435px;top:350px;width:1485px;height:1px;background:#2b2b2b"></div>
<div class="abs" style="left:435px;top:351px;width:1485px;height:700px;background:#181818"></div>
<div class="t" style="left:460px;top:364px;font-size:13.75px;line-height:18px;color:#9d9d9d">问题</div>
<div class="t" style="left:518px;top:364px;font-size:13.75px;line-height:18px;color:#9d9d9d">输出</div>
<div class="t" style="left:575px;top:364px;font-size:13.75px;line-height:18px;color:#9d9d9d">调试控制台</div>
<div class="t" style="left:673px;top:364px;font-size:13.75px;line-height:18px;color:#e7e7e7">终端</div>
<div class="t" style="left:731px;top:364px;font-size:13.75px;line-height:18px;color:#9d9d9d">端口</div>
<div class="abs" style="left:671px;top:386px;width:34px;height:1px;background:#0078d4"></div>
<svg class="ico" style="left:1634px;top:364px" width="18" height="18" viewBox="0 0 18 18"><path d="M9 1v16M1 9h16" stroke="#cccccc" stroke-width="1.4"/></svg>
<svg class="ico" style="left:1657px;top:369px" width="11" height="8" viewBox="0 0 11 8"><path d="M1 1.5 5.5 6 10 1.5" fill="none" stroke="#cccccc" stroke-width="1.2"/></svg>
<svg class="ico" style="left:1680px;top:364px" width="19" height="19" viewBox="0 0 19 19"><rect x="1" y="1" width="17" height="17" rx="1.5" fill="none" stroke="#cccccc" stroke-width="1.3"/><path d="M4.5 6 8 9 4.5 12M9 13.5h5" fill="none" stroke="#cccccc" stroke-width="1.2"/></svg>
<div class="t" style="left:1705px;top:365px;font-size:14px;line-height:18px;color:#cccccc">Python</div>
<svg class="ico" style="left:1759px;top:363px" width="18" height="18" viewBox="0 0 18 18"><rect x="1" y="1" width="16" height="16" rx="1.5" fill="none" stroke="#cccccc" stroke-width="1.3"/><path d="M9 1v16" stroke="#cccccc" stroke-width="1.3"/></svg>
<svg class="ico" style="left:1789px;top:363px" width="16" height="19" viewBox="0 0 16 19"><path d="M1.5 4.5h13M5.5 4.5V2h5v2.5M3 4.5l.8 12.5h8.4l.8-12.5" fill="none" stroke="#cccccc" stroke-width="1.3"/><path d="M6.3 7v7.5M9.7 7v7.5" stroke="#cccccc" stroke-width="1.1"/></svg>
<svg class="ico" style="left:1818.5px;top:370px" width="18.5" height="6" viewBox="0 0 18.5 6"><circle cx="3" cy="3" r="1.5" fill="#cccccc"/><circle cx="9.25" cy="3" r="1.5" fill="#cccccc"/><circle cx="15.5" cy="3" r="1.5" fill="#cccccc"/></svg>
<svg class="ico" style="left:1851px;top:366px" width="16" height="10" viewBox="0 0 16 10"><path d="M1.5 8.5 8 2l6.5 6.5" fill="none" stroke="#cccccc" stroke-width="1.3"/></svg>
<svg class="ico" style="left:1884px;top:366px" width="14" height="14" viewBox="0 0 14 14"><path d="M1.5 1.5l11 11M12.5 1.5l-11 11" stroke="#cccccc" stroke-width="1.3"/></svg>
<div class="term" style="top:415px">PS D:\python<span class="w">作</span><span class="w">业</span>&gt; &amp; <span style="color:#f5f543">C:/Users/aA178/AppData/Local/Programs/Python/Python312/python.exe</span> d:/python<span class="w">作</span><span class="w">业</span>/7.5.py</div>
<div class="term" style="top:437px">1. <span class="w">添</span><span class="w">加</span><span class="w">单</span><span class="w">词</span></div>
<div class="term" style="top:459px">2. <span class="w">查</span><span class="w">询</span><span class="w">单</span><span class="w">词</span></div>
<div class="term" style="top:481px">3. <span class="w">退</span><span class="w">出</span></div>
<div class="term" style="top:503px"><span class="w">请</span><span class="w">输</span><span class="w">入</span><span class="w">你</span><span class="w">的</span><span class="w">选</span><span class="w">择</span><span class="w">：</span>1</div>
<div class="term" style="top:525px"><span class="w">请</span><span class="w">输</span><span class="w">入</span><span class="w">要</span><span class="w">添</span><span class="w">加</span><span class="w">的</span><span class="w">英</span><span class="w">文</span><span class="w">单</span><span class="w">词</span><span class="w">：</span>name</div>
<div class="term" style="top:547px"><span class="w">请</span><span class="w">输</span><span class="w">入</span><span class="w">该</span><span class="w">单</span><span class="w">词</span><span class="w">的</span><span class="w">中</span><span class="w">文</span><span class="w">释</span><span class="w">义</span><span class="w">：</span><span class="w">名</span><span class="w">字</span></div>
<div class="term" style="top:569px">name <span class="w">已</span><span class="w">成</span><span class="w">功</span><span class="w">添</span><span class="w">加</span><span class="w">到</span><span class="w">字</span><span class="w">典</span><span class="w">库</span></div>
<div class="term" style="top:591px">1. <span class="w">添</span><span class="w">加</span><span class="w">单</span><span class="w">词</span></div>
<div class="term" style="top:613px">2. <span class="w">查</span><span class="w">询</span><span class="w">单</span><span class="w">词</span></div>
<div class="term" style="top:635px">3. <span class="w">退</span><span class="w">出</span></div>
<div class="term" style="top:657px"><span class="w">请</span><span class="w">输</span><span class="w">入</span><span class="w">你</span><span class="w">的</span><span class="w">选</span><span class="w">择</span><span class="w">：</span>2</div>
<div class="term" style="top:679px"><span class="w">请</span><span class="w">输</span><span class="w">入</span><span class="w">要</span><span class="w">查</span><span class="w">询</span><span class="w">的</span><span class="w">英</span><span class="w">文</span><span class="w">单</span><span class="w">词</span><span class="w">：</span>name</div>
<div class="term" style="top:701px">name <span class="w">的</span><span class="w">中</span><span class="w">文</span><span class="w">释</span><span class="w">义</span><span class="w">是</span><span class="w">：</span><span class="w">名</span><span class="w">字</span></div>
<div class="term" style="top:723px">1. <span class="w">添</span><span class="w">加</span><span class="w">单</span><span class="w">词</span></div>
<div class="term" style="top:745px">2. <span class="w">查</span><span class="w">询</span><span class="w">单</span><span class="w">词</span></div>
<div class="term" style="top:767px">3. <span class="w">退</span><span class="w">出</span></div>
<div class="term" style="top:789px"><span class="w">请</span><span class="w">输</span><span class="w">入</span><span class="w">你</span><span class="w">的</span><span class="w">选</span><span class="w">择</span><span class="w">：</span></div>
<div class="abs" style="left:1902px;top:414px;width:1px;height:637px;background:#0e0e0e"></div><div class="abs" style="left:1902px;top:414px;width:18px;height:1px;background:#0e0e0e"></div>
<div class="abs" style="left:604px;top:787px;width:9px;height:22px;background:#cccccc"></div>
<div class="abs" style="left:0;top:1051px;width:1920px;height:1px;background:#2b2b2b"></div>
<div class="abs" style="left:0;top:1052px;width:1920px;height:28px;background:#181818"></div>
<div class="abs" style="left:0;top:1053px;width:43px;height:25px;background:#0078d4"></div>
<svg class="ico" style="left:14px;top:1055px" width="16" height="18" viewBox="0 0 16 18"><path d="M2 5.7l5.5 4.5L2 15.7M13.4 1.3 8.2 5.7l5.2 4.8" fill="none" stroke="#ffffff" stroke-width="1.3"/></svg>
<div class="abs" style="left:0;top:1078px;width:1920px;height:2px;background:#0a0a0a"></div>
<svg class="ico" style="left:53px;top:1056px" width="16" height="16" viewBox="0 0 16 16"><circle cx="8" cy="8" r="7" fill="none" stroke="#cccccc" stroke-width="1.2"/><path d="M5 5l6 6M11 5l-6 6" stroke="#cccccc" stroke-width="1.2"/></svg>
<div class="t" style="left:73px;top:1056px;font-size:15px;line-height:18px;color:#cccccc">0</div>
<svg class="ico" style="left:87px;top:1055px" width="17" height="16" viewBox="0 0 17 16"><path d="M8.5 1.5 1 15h15z" fill="none" stroke="#cccccc" stroke-width="1.2" stroke-linejoin="round"/><path d="M8.5 6v5M8.5 12v1.5" stroke="#cccccc" stroke-width="1.2"/></svg>
<div class="t" style="left:107px;top:1056px;font-size:15px;line-height:18px;color:#cccccc">0</div>
<div class="t" style="left:1412px;top:1056px;font-size:14.5px;line-height:18px;color:#cccccc">行 48，列 11</div>
<div class="t" style="left:1518px;top:1056px;font-size:14.5px;line-height:18px;color:#cccccc">空格: 4</div>
<div class="t" style="left:1584px;top:1056px;font-size:14.5px;line-height:18px;color:#cccccc">UTF-8</div>
<div class="t" style="left:1643px;top:1056px;font-size:14.5px;line-height:18px;color:#cccccc">CRLF</div>
<div class="t" style="left:1722px;top:1056px;font-size:14.5px;line-height:18px;color:#cccccc">Python</div>
<div class="t" style="left:1826px;top:1056px;font-size:14.5px;line-height:18px;color:#cccccc">3.12.8</div>
<div class="t" style="left:1697px;top:1055px;font-size:15px;line-height:18px;color:#cccccc">{ }</div>
<svg class="ico" style="left:1787px;top:1056px" width="18.5" height="16.7" viewBox="0 0 21 19"><ellipse cx="10.6" cy="13.7" rx="10.5" ry="4.9" fill="#cccccc"/><rect x="3" y="1.25" width="7.1" height="7.3" rx="3" fill="#181818" stroke="#cccccc" stroke-width="1.9"/><rect x="10.9" y="1.25" width="7.1" height="7.3" rx="3" fill="#181818" stroke="#cccccc" stroke-width="1.9"/><rect x="4.2" y="9.6" width="12" height="5.5" rx=".8" fill="#181818"/><rect x="7.3" y="10.4" width="1.9" height="3.8" fill="#cccccc"/><rect x="11.7" y="10.4" width="2.1" height="3.8" fill="#cccccc"/></svg>
<svg class="ico" style="left:1884px;top:1055px" width="16" height="18" viewBox="0 0 16 18"><path d="M3 12.5V7.5a5 5 0 0 1 10 0v5l1.5 2h-13zM6 15.5a2 2 0 0 0 4 0" fill="none" stroke="#cccccc" stroke-width="1.3" stroke-linejoin="round"/></svg>
</body></html>
